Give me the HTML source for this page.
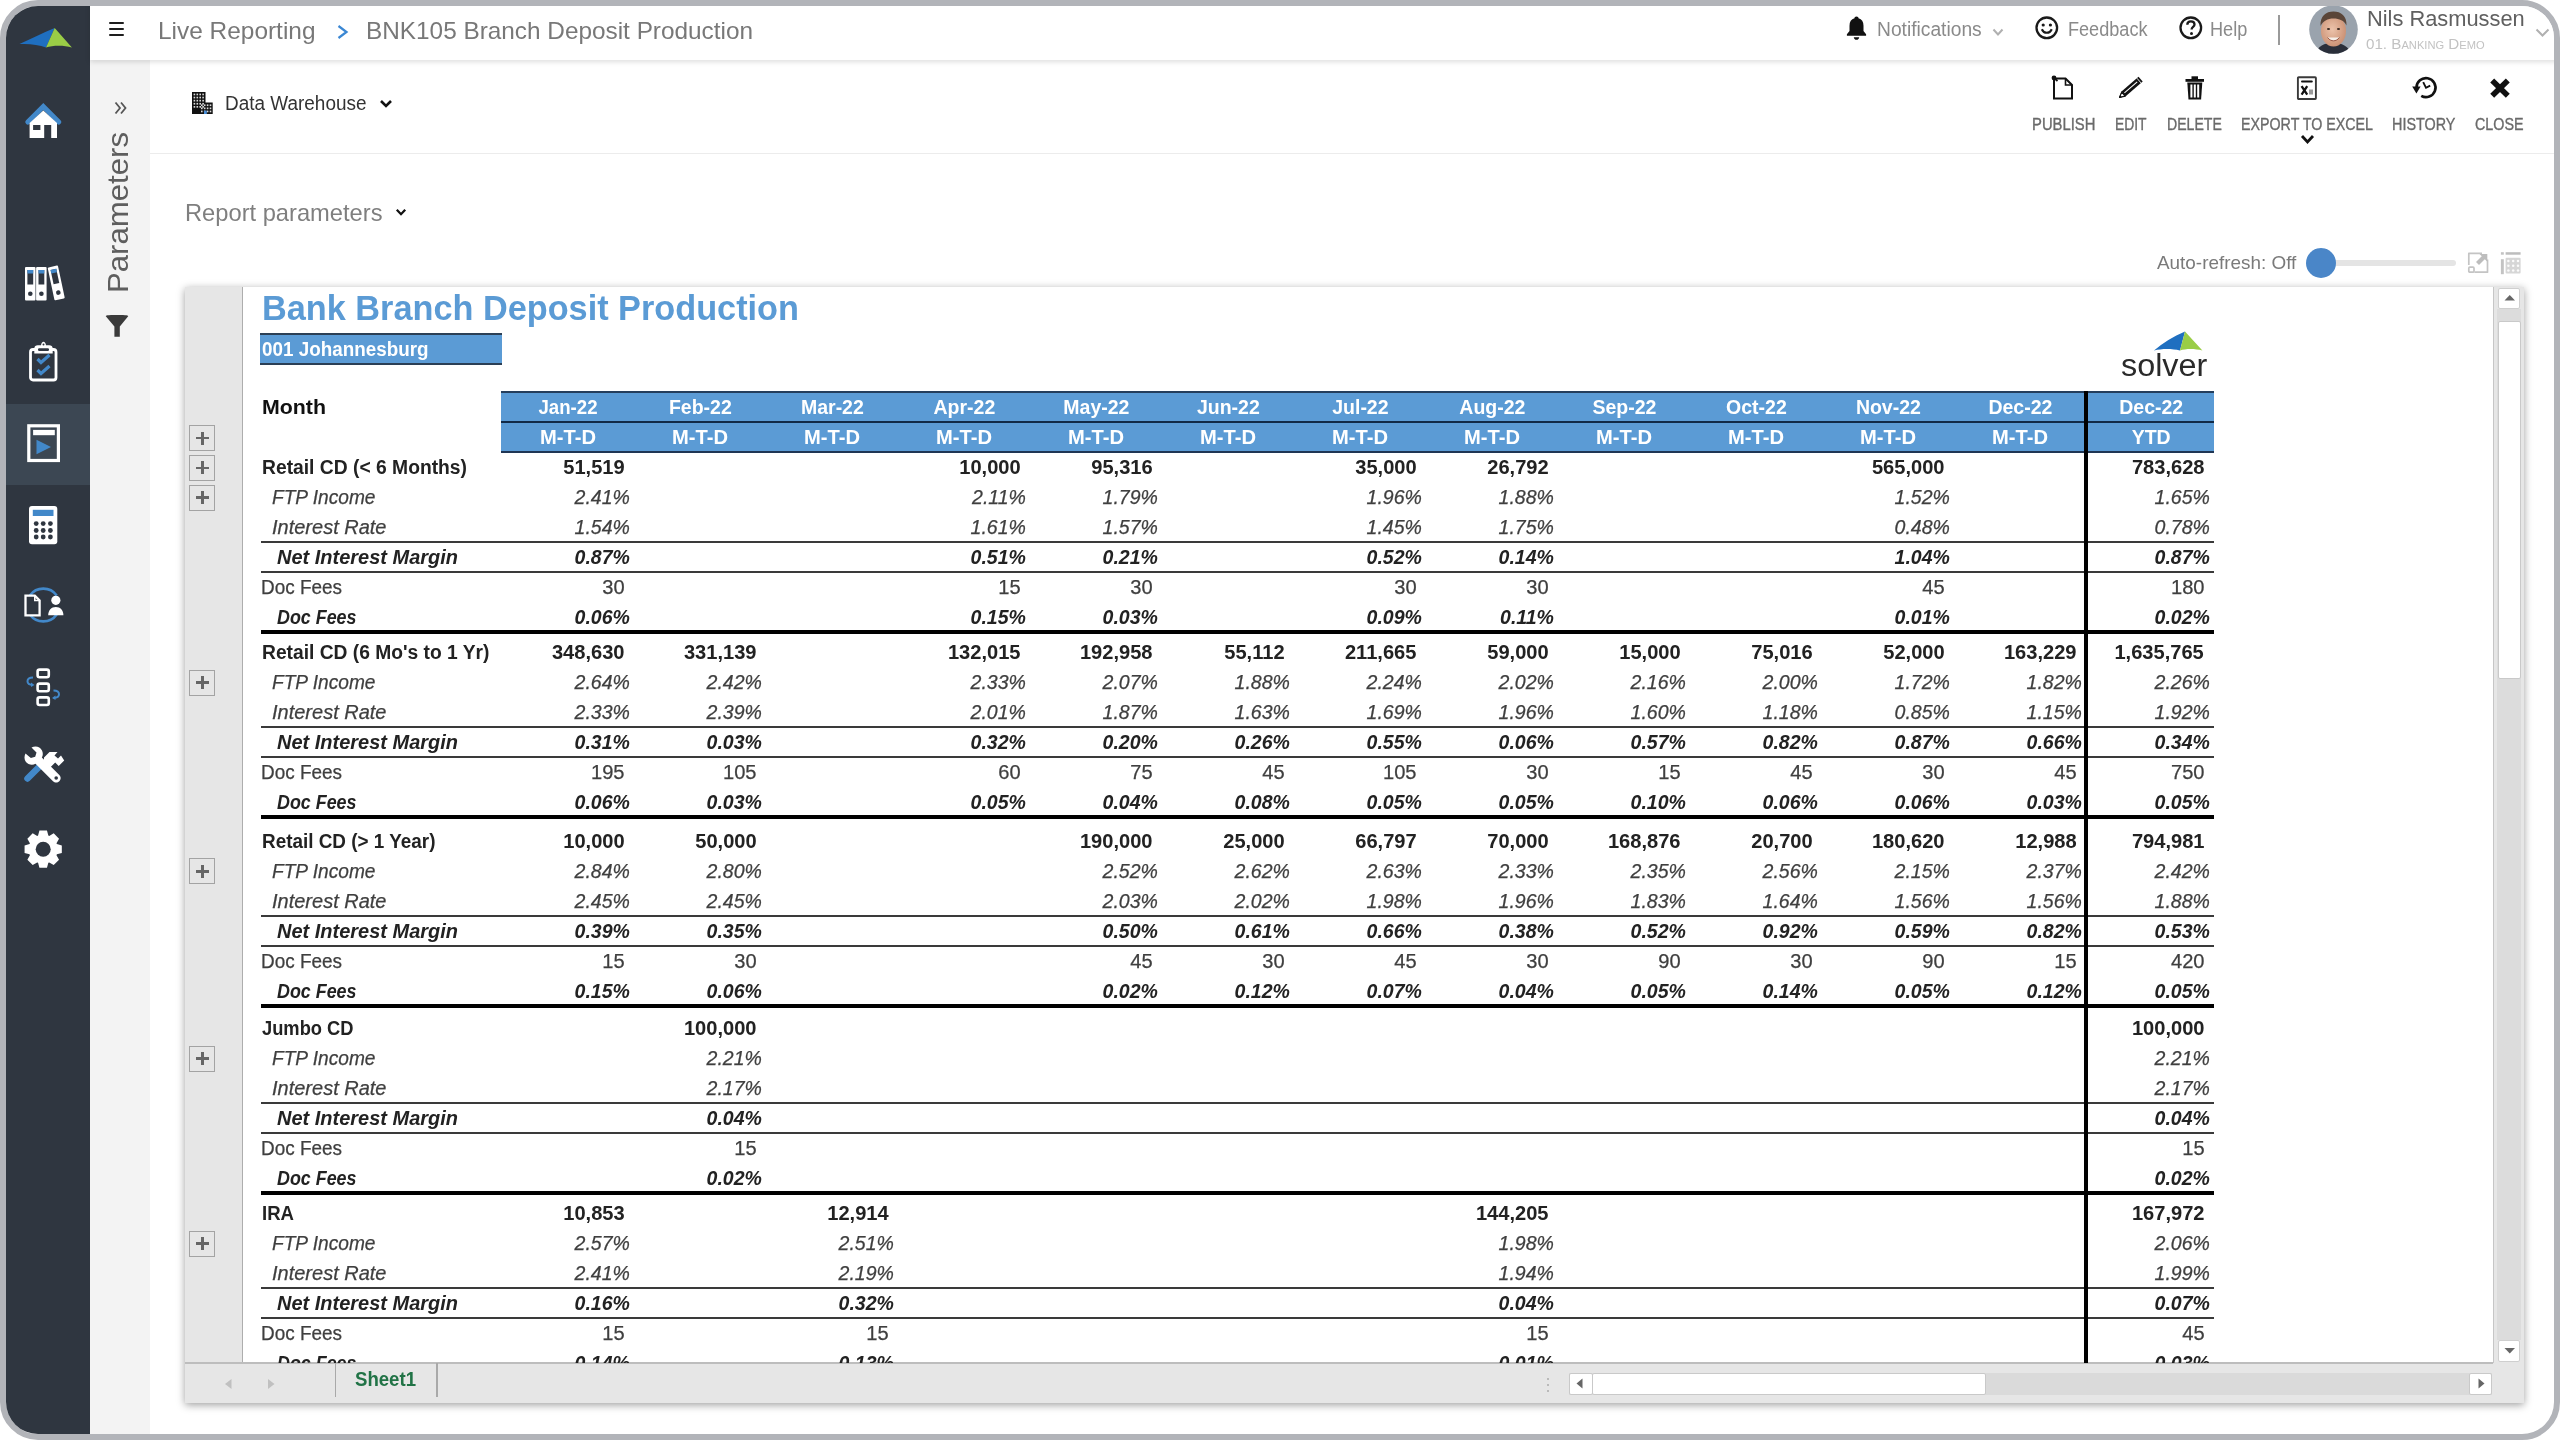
<!DOCTYPE html><html><head><meta charset="utf-8"><style>html,body{margin:0;padding:0;background:#fff;width:2560px;height:1440px;overflow:hidden;}#frame{position:absolute;left:0;top:0;width:2560px;height:1440px;box-sizing:border-box;border:6px solid #b2b4b9;border-radius:38px;overflow:hidden;background:#fff;}#in{position:absolute;left:-6px;top:-6px;width:2560px;height:1440px;will-change:transform;}</style></head><body><div id="frame"><div id="in"><div style="position:absolute;left:0px;top:0px;width:90px;height:1440px;background:#2f3640;"></div><div style="position:absolute;left:0px;top:404px;width:90px;height:81px;background:#3c4753;"></div><div style="position:absolute;left:90px;top:60px;width:60px;height:1380px;background:#f3f3f3;"></div><div style="position:absolute;left:90px;top:0px;width:2470px;height:60px;background:#fff;box-shadow:0 2px 5px rgba(0,0,0,0.13);z-index:2;"></div><div style="position:absolute;left:150px;top:153px;width:2410px;height:1px;background:#ececec;"></div><div style="position:absolute;left:108.8px;top:22.3px;width:15.4px;height:2.2px;background:#1e1e1e;border-radius:1px;z-index:3;"></div><div style="position:absolute;left:108.8px;top:28.3px;width:15.4px;height:2.2px;background:#1e1e1e;border-radius:1px;z-index:3;"></div><div style="position:absolute;left:108.8px;top:34.3px;width:15.4px;height:2.2px;background:#1e1e1e;border-radius:1px;z-index:3;"></div><div style="position:absolute;left:158.20px;top:19.28px;white-space:pre;font-family:'Liberation Sans',sans-serif;font-size:24px;line-height:24px;color:#787878;font-weight:normal;transform:scaleX(1.0177);transform-origin:0 0;z-index:3;">Live Reporting</div><svg style="position:absolute;left:336px;top:24px;overflow:visible;z-index:3;" width="14" height="16" viewBox="0 0 14 16"><polyline points="2.5,2 10.5,8 2.5,14" fill="none" stroke="#3a87d3" stroke-width="2.2"/></svg><div style="position:absolute;left:365.50px;top:19.28px;white-space:pre;font-family:'Liberation Sans',sans-serif;font-size:24px;line-height:24px;color:#787878;font-weight:normal;transform:scaleX(1.0143);transform-origin:0 0;z-index:3;">BNK105 Branch Deposit Production</div><svg style="position:absolute;left:1846px;top:16px;overflow:visible;z-index:3;" width="21" height="24" viewBox="0 0 21 24"><path d="M10.5 0.5c1.3 0 2 .8 2 1.8 3.3.8 5 3.6 5 7.4v5.3l2.6 3.3v1.5H0.9v-1.5l2.6-3.3V9.7c0-3.8 1.7-6.6 5-7.4 0-1 .7-1.8 2-1.8z" fill="#111"/><path d="M7.8 21.2h5.4c0 1.5-1.2 2.6-2.7 2.6s-2.7-1.1-2.7-2.6z" fill="#111"/></svg><div style="position:absolute;left:1876.90px;top:19.07px;white-space:pre;font-family:'Liberation Sans',sans-serif;font-size:20px;line-height:20px;color:#8a8a8a;font-weight:normal;transform:scaleX(0.9611);transform-origin:0 0;z-index:3;">Notifications</div><svg style="position:absolute;left:1992px;top:28px;overflow:visible;z-index:3;" width="12" height="9" viewBox="0 0 12 9"><polyline points="1.5,1.5 6,6.5 10.5,1.5" fill="none" stroke="#b0b0b0" stroke-width="2"/></svg><svg style="position:absolute;left:2035px;top:16px;overflow:visible;z-index:3;" width="24" height="24" viewBox="0 0 24 24"><circle cx="11.8" cy="11.8" r="10.3" fill="none" stroke="#1a1a1a" stroke-width="2.3"/><circle cx="8.2" cy="9" r="1.6" fill="#1a1a1a"/><circle cx="15.4" cy="9" r="1.6" fill="#1a1a1a"/><path d="M6.8 13.2c1.2 2.6 3 3.6 5 3.6s3.8-1 5-3.6" fill="none" stroke="#1a1a1a" stroke-width="2.1"/></svg><div style="position:absolute;left:2067.50px;top:19.07px;white-space:pre;font-family:'Liberation Sans',sans-serif;font-size:20px;line-height:20px;color:#8a8a8a;font-weight:normal;transform:scaleX(0.9050);transform-origin:0 0;z-index:3;">Feedback</div><svg style="position:absolute;left:2179px;top:16px;overflow:visible;z-index:3;" width="24" height="24" viewBox="0 0 24 24"><circle cx="11.8" cy="11.8" r="10.3" fill="none" stroke="#1a1a1a" stroke-width="2.3"/><path d="M8.3 8.8c0-2.2 1.6-3.5 3.6-3.5s3.6 1.3 3.6 3.2c0 2.4-2.9 2.5-2.9 4.9" fill="none" stroke="#1a1a1a" stroke-width="2.3"/><circle cx="12.5" cy="17.6" r="1.5" fill="#1a1a1a"/></svg><div style="position:absolute;left:2210.40px;top:19.07px;white-space:pre;font-family:'Liberation Sans',sans-serif;font-size:20px;line-height:20px;color:#8a8a8a;font-weight:normal;transform:scaleX(0.9066);transform-origin:0 0;z-index:3;">Help</div><div style="position:absolute;left:2278.3px;top:15px;width:1.6px;height:30px;background:#9a9a9a;z-index:3;"></div><svg style="position:absolute;left:2309px;top:5px;overflow:visible;z-index:3;" width="49" height="49" viewBox="0 0 49 49"><defs><clipPath id="av"><circle cx="24.5" cy="24.5" r="24.3"/></clipPath><radialGradient id="fg" cx="0.45" cy="0.45" r="0.6"><stop offset="0" stop-color="#ecc3ab"/><stop offset="1" stop-color="#c98f72"/></radialGradient></defs><g clip-path="url(#av)"><rect width="49" height="49" fill="#9aa3ad"/><path d="M6 49c3-8 9-11 18-11s15 3 19 11z" fill="#2a2f3a"/><ellipse cx="24.5" cy="26" rx="12.5" ry="15.5" fill="url(#fg)"/><path d="M11.5 21c-.5-10 5.5-14.5 13-14.5s13.5 4.5 13 14c-2.5-5-7-7-13-7s-10.5 2.5-13 7.5z" fill="#5a4538"/><ellipse cx="19.5" cy="24" rx="1.6" ry="1.1" fill="#3a2a22"/><ellipse cx="29.5" cy="24" rx="1.6" ry="1.1" fill="#3a2a22"/><path d="M18.5 32.5c2 2.5 4 3.3 6 3.3s4-.8 6-3.3" fill="#f6efe9" stroke="#9a5a48" stroke-width="1"/></g></svg><div style="position:absolute;left:2366.50px;top:8.08px;white-space:pre;font-family:'Liberation Sans',sans-serif;font-size:22px;line-height:22px;color:#606060;font-weight:normal;transform:scaleX(0.9922);transform-origin:0 0;z-index:3;">Nils Rasmussen</div><div style="position:absolute;left:2366.00px;top:36.10px;white-space:pre;font-family:'Liberation Sans',sans-serif;font-size:15px;line-height:15px;color:#c2c2c2;font-weight:normal;transform:scaleX(1.0114);transform-origin:0 0;font-variant:small-caps;z-index:3;">01. Banking Demo</div><svg style="position:absolute;left:2535px;top:28px;overflow:visible;z-index:3;" width="15" height="10" viewBox="0 0 15 10"><polyline points="1.5,1.5 7.5,7.5 13.5,1.5" fill="none" stroke="#b0b0b0" stroke-width="2"/></svg><svg style="position:absolute;left:191.7px;top:91.7px;overflow:visible;" width="22" height="23" viewBox="0 0 22 23"><rect x="0" y="0" width="13.5" height="22" fill="#111"/><rect x="7.2" y="10.5" width="13.5" height="11.5" fill="#111"/><rect x="1.6" y="1.6" width="1.6" height="1.7" fill="#fff" opacity="0.85"/><rect x="4.5" y="1.6" width="1.6" height="1.7" fill="#fff" opacity="0.85"/><rect x="7.4" y="1.6" width="1.6" height="1.7" fill="#fff" opacity="0.85"/><rect x="10.299999999999999" y="1.6" width="1.6" height="1.7" fill="#fff" opacity="0.85"/><rect x="1.6" y="4.7" width="1.6" height="1.7" fill="#fff" opacity="0.85"/><rect x="4.5" y="4.7" width="1.6" height="1.7" fill="#fff" opacity="0.85"/><rect x="7.4" y="4.7" width="1.6" height="1.7" fill="#fff" opacity="0.85"/><rect x="10.299999999999999" y="4.7" width="1.6" height="1.7" fill="#fff" opacity="0.85"/><rect x="1.6" y="7.800000000000001" width="1.6" height="1.7" fill="#fff" opacity="0.85"/><rect x="4.5" y="7.800000000000001" width="1.6" height="1.7" fill="#fff" opacity="0.85"/><rect x="7.4" y="7.800000000000001" width="1.6" height="1.7" fill="#fff" opacity="0.85"/><rect x="10.299999999999999" y="7.800000000000001" width="1.6" height="1.7" fill="#fff" opacity="0.85"/><rect x="1.6" y="10.9" width="1.6" height="1.7" fill="#fff" opacity="0.85"/><rect x="4.5" y="10.9" width="1.6" height="1.7" fill="#fff" opacity="0.85"/><rect x="7.4" y="10.9" width="1.6" height="1.7" fill="#fff" opacity="0.85"/><rect x="10.299999999999999" y="10.9" width="1.6" height="1.7" fill="#fff" opacity="0.85"/><rect x="1.6" y="14.0" width="1.6" height="1.7" fill="#fff" opacity="0.85"/><rect x="4.5" y="14.0" width="1.6" height="1.7" fill="#fff" opacity="0.85"/><rect x="7.4" y="14.0" width="1.6" height="1.7" fill="#fff" opacity="0.85"/><rect x="10.299999999999999" y="14.0" width="1.6" height="1.7" fill="#fff" opacity="0.85"/><rect x="9.0" y="12.4" width="1.6" height="1.7" fill="#fff" opacity="0.85"/><rect x="11.9" y="12.4" width="1.6" height="1.7" fill="#fff" opacity="0.85"/><rect x="14.8" y="12.4" width="1.6" height="1.7" fill="#fff" opacity="0.85"/><rect x="17.7" y="12.4" width="1.6" height="1.7" fill="#fff" opacity="0.85"/><rect x="9.0" y="15.5" width="1.6" height="1.7" fill="#fff" opacity="0.85"/><rect x="11.9" y="15.5" width="1.6" height="1.7" fill="#fff" opacity="0.85"/><rect x="14.8" y="15.5" width="1.6" height="1.7" fill="#fff" opacity="0.85"/><rect x="17.7" y="15.5" width="1.6" height="1.7" fill="#fff" opacity="0.85"/><rect x="9.0" y="18.6" width="1.6" height="1.7" fill="#fff" opacity="0.85"/><rect x="11.9" y="18.6" width="1.6" height="1.7" fill="#fff" opacity="0.85"/><rect x="14.8" y="18.6" width="1.6" height="1.7" fill="#fff" opacity="0.85"/><rect x="17.7" y="18.6" width="1.6" height="1.7" fill="#fff" opacity="0.85"/><rect x="12" y="18.6" width="2.8" height="3.4" fill="#4a8fd8"/></svg><div style="position:absolute;left:225.00px;top:93.07px;white-space:pre;font-family:'Liberation Sans',sans-serif;font-size:20px;line-height:20px;color:#333333;font-weight:normal;transform:scaleX(0.9475);transform-origin:0 0;">Data Warehouse</div><svg style="position:absolute;left:378.5px;top:99px;overflow:visible;" width="14" height="10" viewBox="0 0 14 10"><polyline points="2,2 7,7 12,2" fill="none" stroke="#111" stroke-width="2.6"/></svg><div style="position:absolute;left:2031.50px;top:115.83px;white-space:pre;font-family:'Liberation Sans',sans-serif;font-size:16.5px;line-height:16.5px;color:#6a6a6a;font-weight:normal;transform:scaleX(0.8979);transform-origin:0 0;-webkit-text-stroke:0.35px #6a6a6a;">PUBLISH</div><div style="position:absolute;left:2114.80px;top:115.83px;white-space:pre;font-family:'Liberation Sans',sans-serif;font-size:16.5px;line-height:16.5px;color:#6a6a6a;font-weight:normal;transform:scaleX(0.8406);transform-origin:0 0;-webkit-text-stroke:0.35px #6a6a6a;">EDIT</div><div style="position:absolute;left:2166.80px;top:115.83px;white-space:pre;font-family:'Liberation Sans',sans-serif;font-size:16.5px;line-height:16.5px;color:#6a6a6a;font-weight:normal;transform:scaleX(0.8537);transform-origin:0 0;-webkit-text-stroke:0.35px #6a6a6a;">DELETE</div><div style="position:absolute;left:2241.00px;top:115.83px;white-space:pre;font-family:'Liberation Sans',sans-serif;font-size:16.5px;line-height:16.5px;color:#6a6a6a;font-weight:normal;transform:scaleX(0.8636);transform-origin:0 0;-webkit-text-stroke:0.35px #6a6a6a;">EXPORT TO EXCEL</div><div style="position:absolute;left:2392.40px;top:115.83px;white-space:pre;font-family:'Liberation Sans',sans-serif;font-size:16.5px;line-height:16.5px;color:#6a6a6a;font-weight:normal;transform:scaleX(0.8715);transform-origin:0 0;-webkit-text-stroke:0.35px #6a6a6a;">HISTORY</div><div style="position:absolute;left:2475.00px;top:115.83px;white-space:pre;font-family:'Liberation Sans',sans-serif;font-size:16.5px;line-height:16.5px;color:#6a6a6a;font-weight:normal;transform:scaleX(0.8670);transform-origin:0 0;-webkit-text-stroke:0.35px #6a6a6a;">CLOSE</div><svg style="position:absolute;left:2051px;top:75px;overflow:visible;" width="24" height="25" viewBox="0 0 24 25"><path d="M3 3.5h11.5l6.5 6.5v13.5H3z" fill="none" stroke="#111" stroke-width="2"/><path d="M14.5 3.5v6.5h6.5" fill="none" stroke="#111" stroke-width="1.6"/><circle cx="3" cy="3" r="2.4" fill="#111"/><path d="M3 3l3.5 3" stroke="#111" stroke-width="1.8"/></svg><svg style="position:absolute;left:2118px;top:76px;overflow:visible;" width="26" height="24" viewBox="0 0 26 24"><path d="M1.1 21.8L3.5 15.5 20.5 0.7 24.7 5.5 7.7 20.3z" fill="#111"/><path d="M6.4 16.9L19.2 5.8" stroke="#fff" stroke-width="1.1"/><path d="M18.9 2.2l4.2 4.8" stroke="#fff" stroke-width="0.9"/><path d="M1.6 21.3L3.7 16.1 7.2 20.1z" fill="#fff" stroke="#111" stroke-width="1.2" stroke-linejoin="round"/><path d="M1.1 21.8l.9-2.6 1.8 2z" fill="#111"/></svg><svg style="position:absolute;left:2184.5px;top:76px;overflow:visible;" width="20" height="24" viewBox="0 0 20 24"><rect x="0.5" y="3" width="18.5" height="2.8" fill="#111"/><rect x="6.5" y="0.3" width="6.5" height="3" fill="#111"/><path d="M2.3 6.5h15l-1.2 17H3.5z" fill="#111"/><rect x="5.4" y="8.5" width="2" height="13" fill="#fff"/><rect x="8.8" y="8.5" width="2" height="13" fill="#fff"/><rect x="12.2" y="8.5" width="2" height="13" fill="#fff"/></svg><svg style="position:absolute;left:2296px;top:76px;overflow:visible;" width="22" height="24" viewBox="0 0 22 24"><rect x="1.9" y="1.2" width="18" height="21.8" rx="0.8" fill="none" stroke="#3a3a3a" stroke-width="1.9"/><rect x="5" y="4.6" width="11.8" height="2" rx="1" fill="#111"/><path d="M5.6 10.2l5.6 8.4M11.2 10.2l-5.6 8.4" stroke="#111" stroke-width="2.3"/><rect x="13" y="13.5" width="4" height="5" fill="#9a9a9a"/></svg><svg style="position:absolute;left:2300px;top:134px;overflow:visible;" width="15" height="11" viewBox="0 0 15 11"><polyline points="2,2 7.5,8 13,2" fill="none" stroke="#111" stroke-width="2.8"/></svg><svg style="position:absolute;left:2409.5px;top:76px;overflow:visible;" width="28" height="25" viewBox="0 0 28 25"><path d="M6.5 11.6A9.5 9.5 0 1 1 11.25 19.83" fill="none" stroke="#111" stroke-width="2.7"/><path d="M2.2 10.6h8.4l-4.2 6.9z" fill="#111"/><path d="M13.2 6.2L16 11.8 20.2 9.6" fill="none" stroke="#111" stroke-width="1.9"/></svg><svg style="position:absolute;left:2487.5px;top:76px;overflow:visible;" width="24" height="24" viewBox="0 0 24 24"><path d="M4.2 4.6L19.8 19.8M19.8 4.6L4.2 19.8" stroke="#111" stroke-width="5.6" stroke-linecap="butt"/></svg><div style="position:absolute;left:184.80px;top:200.68px;white-space:pre;font-family:'Liberation Sans',sans-serif;font-size:24px;line-height:24px;color:#7f7f7f;font-weight:normal;transform:scaleX(0.9870);transform-origin:0 0;">Report parameters</div><svg style="position:absolute;left:395px;top:208px;overflow:visible;" width="12" height="9" viewBox="0 0 12 9"><polyline points="1.8,1.8 6,6.2 10.2,1.8" fill="none" stroke="#111" stroke-width="2.3"/></svg><div style="position:absolute;left:2156.60px;top:252.52px;white-space:pre;font-family:'Liberation Sans',sans-serif;font-size:19px;line-height:19px;color:#7a7a7a;font-weight:normal;transform:scaleX(0.9942);transform-origin:0 0;">Auto-refresh: Off</div><div style="position:absolute;left:2318px;top:259.5px;width:138px;height:6.5px;background:#e4e4e4;border-radius:3px;"></div><div style="position:absolute;left:2305.7px;top:247.5px;width:30px;height:30px;background:#4a86c8;border-radius:50%;"></div><svg style="position:absolute;left:2467px;top:252px;overflow:visible;" width="22" height="22" viewBox="0 0 22 22"><path d="M7.5 20.2H20.5V7.5M15 1.4H1.8V13" fill="none" stroke="#c4c4c4" stroke-width="1.7" stroke-linejoin="round"/><rect x="1.8" y="15.2" width="5.2" height="5" rx="1" fill="none" stroke="#c4c4c4" stroke-width="1.7"/><path d="M10.5 11.5L17.5 4.5" stroke="#bdbdbd" stroke-width="4.2"/><path d="M12.5 2h7.8v7.8z" fill="#bdbdbd"/></svg><svg style="position:absolute;left:2500px;top:252px;overflow:visible;" width="22" height="22" viewBox="0 0 22 22"><rect x="0.9" y="7.2" width="2.9" height="15" fill="#c3c3c3"/><rect x="0.9" y="0.2" width="2.9" height="2.5" fill="#c3c3c3"/><rect x="5.6" y="0.2" width="15" height="2.5" fill="#bdbdbd"/><rect x="5.6" y="5.8" width="15" height="15.6" rx="1" fill="#d6d6d6"/><circle cx="8.4" cy="8.9" r="1.25" fill="#fbfbfb"/><circle cx="13.2" cy="8.9" r="1.25" fill="#fbfbfb"/><circle cx="18.0" cy="8.9" r="1.25" fill="#fbfbfb"/><circle cx="8.4" cy="13.7" r="1.25" fill="#fbfbfb"/><circle cx="13.2" cy="13.7" r="1.25" fill="#fbfbfb"/><circle cx="18.0" cy="13.7" r="1.25" fill="#fbfbfb"/><circle cx="8.4" cy="18.5" r="1.25" fill="#fbfbfb"/><circle cx="13.2" cy="18.5" r="1.25" fill="#fbfbfb"/><circle cx="18.0" cy="18.5" r="1.25" fill="#fbfbfb"/></svg><svg style="position:absolute;left:113.5px;top:101px;overflow:visible;" width="14" height="15" viewBox="0 0 14 15"><polyline points="1.5,1.5 6,7 1.5,12.5" fill="none" stroke="#555" stroke-width="1.8"/><polyline points="7,1.5 11.5,7 7,12.5" fill="none" stroke="#555" stroke-width="1.8"/></svg><div style="position:absolute;left:38.05px;top:197.9px;width:160px;height:30px;transform:rotate(-90deg);transform-origin:80px 15px;"><div style="position:absolute;left:0;top:0;white-space:pre;font-family:'Liberation Sans',sans-serif;font-size:30px;line-height:30px;color:#5e5e5e;transform:scaleX(1.0383);transform-origin:0 0;">Parameters</div></div><svg style="position:absolute;left:105px;top:315px;overflow:visible;" width="24" height="23" viewBox="0 0 24 23"><path d="M0.8 1.2c0-.7 1-1.2 11.2-1.2s11.2.5 11.2 1.2L14.8 11.5v10.3l-5.4 0V11.5z" fill="#3a3a3a"/></svg><svg style="position:absolute;left:15px;top:24px;overflow:visible;" width="62" height="28" viewBox="0 0 62 28"><path d="M4.5 20C15 15.5 27 9 39.7 4 L31 23.6C24 20.5 14 19.5 4.5 20z" fill="#1f6fc0"/><path d="M39.7 4L56.9 23.6C49 21 38 21 31 23.6z" fill="#9acd46"/></svg><svg style="position:absolute;left:22px;top:100px;overflow:visible;" width="42" height="42" viewBox="0 0 42 42"><polyline points="5.8,22 21.3,6.5 36.8,22" fill="none" stroke="#4288c9" stroke-width="5" stroke-linejoin="miter" stroke-linecap="round"/><path d="M7.6 37.9V23L21.3 10.4 35 23V37.9z" fill="#fff"/><rect x="11.1" y="25" width="7.3" height="5" fill="#2f3640"/><rect x="22.2" y="25" width="7" height="13" fill="#2f3640"/></svg><svg style="position:absolute;left:24.6px;top:266.5px;overflow:visible;" width="40" height="34" viewBox="0 0 40 34"><rect x="0" y="0" width="10.5" height="33.5" rx="1" fill="#fff"/><rect x="2.4" y="3" width="5.8" height="14.5" fill="#2f3640"/><rect x="2.4" y="3" width="5.8" height="3.5" fill="#4288c9"/><circle cx="5.3" cy="26.7" r="2.3" fill="#2f3640"/><rect x="11.1" y="0" width="10.5" height="33.5" rx="1" fill="#fff"/><rect x="13.5" y="3" width="5.8" height="14.5" fill="#2f3640"/><rect x="13.5" y="3" width="5.8" height="3.5" fill="#4288c9"/><circle cx="16.4" cy="26.7" r="2.3" fill="#2f3640"/><g transform="translate(22.6,0.6) rotate(-12 0 0)"><rect x="0" y="0" width="10.5" height="33.5" rx="1" fill="#fff"/><rect x="2.4" y="3" width="5.8" height="14.5" fill="#2f3640"/><rect x="2.4" y="3" width="5.8" height="3.5" fill="#4288c9"/><circle cx="5.3" cy="26.7" r="2.3" fill="#2f3640"/></g></svg><svg style="position:absolute;left:29px;top:341px;overflow:visible;" width="29" height="41" viewBox="0 0 29 41"><rect x="1.5" y="8.5" width="25.5" height="30.5" rx="2.5" fill="none" stroke="#fff" stroke-width="2.8"/><path d="M5.3 12.5V7.5c0-2 1.5-3.2 3.5-3.2h3.2c.3-2.2 1.3-3.6 2.5-3.6s2.2 1.4 2.5 3.6h3.2c2 0 3.5 1.2 3.5 3.2v5z" fill="#fff"/><rect x="9" y="7.2" width="11" height="2.8" rx="1.2" fill="#2f3640"/><circle cx="14.5" cy="3.4" r="1" fill="#2f3640"/><polyline points="8.5,18 12,21.5 20.5,14" fill="none" stroke="#4288c9" stroke-width="3.2"/><polyline points="8.5,29 12,32.5 20.5,25" fill="none" stroke="#4288c9" stroke-width="3.2"/></svg><svg style="position:absolute;left:26.5px;top:424px;overflow:visible;" width="34" height="39" viewBox="0 0 34 39"><rect x="1.8" y="1.8" width="29.6" height="34.7" fill="none" stroke="#fff" stroke-width="3.2"/><rect x="6.1" y="5.9" width="21.7" height="5.3" fill="#fff"/><path d="M9.5 15.8v14.5l14.5-7.25z" fill="#4288c9"/></svg><svg style="position:absolute;left:29.1px;top:505.5px;overflow:visible;" width="29" height="39" viewBox="0 0 29 39"><rect x="0" y="0" width="28.3" height="38.2" rx="3" fill="#fff"/><rect x="3.8" y="3.8" width="20.7" height="6.2" fill="#4288c9"/><circle cx="7.2" cy="17.6" r="2.4" fill="#2f3640"/><circle cx="14.2" cy="17.6" r="2.4" fill="#2f3640"/><circle cx="21.4" cy="17.6" r="2.4" fill="#2f3640"/><circle cx="7.2" cy="24.5" r="2.4" fill="#2f3640"/><circle cx="14.2" cy="24.5" r="2.4" fill="#2f3640"/><circle cx="21.4" cy="24.5" r="2.4" fill="#2f3640"/><circle cx="7.2" cy="31" r="2.4" fill="#2f3640"/><circle cx="14.2" cy="31" r="2.4" fill="#2f3640"/><circle cx="21.4" cy="31" r="2.4" fill="#2f3640"/></svg><svg style="position:absolute;left:23px;top:587px;overflow:visible;" width="42" height="37" viewBox="0 0 42 37"><path d="M6.9 8.6A16.4 16.4 0 0 1 33.7 8.6" fill="none" stroke="#4288c9" stroke-width="2.6"/><path d="M33.7 27.4A16.4 16.4 0 0 1 6.9 27.4" fill="none" stroke="#4288c9" stroke-width="2.6"/><path d="M2.5 8.7h9.3l4.8 4.8v14.8H2.5z" fill="#2f3640" stroke="#fff" stroke-width="2.3"/><path d="M11.8 8.7v4.8h4.8" fill="none" stroke="#fff" stroke-width="1.6"/><circle cx="32.85" cy="13.3" r="4.6" fill="#fff"/><path d="M25.2 28.3c0-5 3-8.3 7.6-8.3s7.6 3.3 7.6 8.3z" fill="#fff"/></svg><svg style="position:absolute;left:25px;top:666px;overflow:visible;" width="37" height="41" viewBox="0 0 37 41"><rect x="12.6" y="3.6" width="11.2" height="7.6" rx="2" fill="none" stroke="#fff" stroke-width="2.6"/><rect x="12.6" y="17.6" width="11.2" height="7.6" rx="2" fill="none" stroke="#fff" stroke-width="2.6"/><rect x="12.6" y="31.4" width="11.2" height="7.6" rx="2" fill="none" stroke="#fff" stroke-width="2.6"/><path d="M8 11.5c-4 0-5.5 2-5.5 3.8s1.5 3.6 5.5 3.6" fill="none" stroke="#4288c9" stroke-width="2"/><path d="M6 16.5l3.5 2.4-3.5 2.2z" fill="#4288c9"/><path d="M28.5 24.5c4 0 5.5 2 5.5 3.8s-1.5 3.6-5.5 3.6" fill="none" stroke="#4288c9" stroke-width="2"/><path d="M30.5 29.5l-3.5 2.4 3.5 2.2z" fill="#4288c9"/></svg><svg style="position:absolute;left:22px;top:749px;overflow:visible;" width="43" height="38" viewBox="0 0 43 38"><path d="M5.5 29.5l12-12" stroke="#4288c9" stroke-width="6.5" stroke-linecap="round"/><path d="M22 8.5l5.5-5.5h8l-3 3.5 3.5 3 3-3 3.2 5-5.5 5.5-3.5-3.5-6.5 6.5-5-5z" fill="#fff"/><path d="M3.5 4.5c-2 4-1 8.5 3 10.5 2.5 1.2 5 1 7-.2L31 32.2c1.8 1.8 4.6 1.8 6.3 0 1.8-1.8 1.8-4.6 0-6.3L19.8 8.5c1.2-2 1.4-4.5.2-7-2-4-6.5-5-10.5-3l5 5-1.3 4.3-4.3 1.3z" fill="#fff"/><circle cx="34.2" cy="29" r="1.8" fill="#2f3640"/></svg><svg style="position:absolute;left:24.2px;top:829.5px;overflow:visible;" width="39" height="39" viewBox="0 0 39 39"><polygon points="32.86,14.06 37.82,15.43 37.82,22.97 32.86,24.34 32.50,25.23 35.04,29.70 29.70,35.04 25.23,32.50 24.34,32.86 22.97,37.82 15.43,37.82 14.06,32.86 13.17,32.50 8.70,35.04 3.36,29.70 5.90,25.23 5.54,24.34 0.58,22.97 0.58,15.43 5.54,14.06 5.90,13.17 3.36,8.70 8.70,3.36 13.17,5.90 14.06,5.54 15.43,0.58 22.97,0.58 24.34,5.54 25.23,5.90 29.70,3.36 35.04,8.70 32.50,13.17" fill="#fff"/><circle cx="19.2" cy="19.2" r="7.5" fill="#2f3640"/></svg><div style="position:absolute;left:185px;top:287px;width:2339px;height:1116px;background:#e6e6e6;box-shadow:0 2px 8px rgba(0,0,0,0.38);"></div><div style="position:absolute;left:243px;top:287px;width:2249.5px;height:1075.5px;background:#fff;"></div><div style="position:absolute;left:241.5px;top:287px;width:1.6px;height:1075.5px;background:#adadad;"></div><div style="position:absolute;left:2492.5px;top:287px;width:1.3px;height:1075.5px;background:#c6c6c6;"></div><div style="position:absolute;left:2497px;top:309px;width:24px;height:1031px;background:#dcdcdc;"></div><div style="position:absolute;left:2498px;top:288px;width:22px;height:21px;background:#fff;border:1px solid #cfcfcf;box-sizing:border-box;border-radius:2px;"></div><svg style="position:absolute;left:2504px;top:294px;overflow:visible;" width="12" height="8" viewBox="0 0 12 8"><path d="M0.5 6.5L5.75 1 11 6.5z" fill="#666"/></svg><div style="position:absolute;left:2498px;top:320.5px;width:22.5px;height:358px;background:#fff;border:1px solid #c9c9c9;box-sizing:border-box;border-radius:2px;"></div><div style="position:absolute;left:2498px;top:1340px;width:22px;height:21.5px;background:#fff;border:1px solid #cfcfcf;box-sizing:border-box;border-radius:2px;"></div><svg style="position:absolute;left:2504px;top:1347px;overflow:visible;" width="12" height="8" viewBox="0 0 12 8"><path d="M0.5 1L5.75 6.5 11 1z" fill="#666"/></svg><div style="position:absolute;left:185px;top:1362px;width:2308px;height:1.8px;background:#bdbdbd;"></div><svg style="position:absolute;left:224px;top:1378px;overflow:visible;" width="9" height="12" viewBox="0 0 9 12"><path d="M7.5 1v10L1 6z" fill="#c0c0c0"/></svg><svg style="position:absolute;left:267px;top:1378px;overflow:visible;" width="9" height="12" viewBox="0 0 9 12"><path d="M1 1v10L7.5 6z" fill="#c0c0c0"/></svg><div style="position:absolute;left:334.6px;top:1363px;width:1.6px;height:34px;background:#a9a9a9;"></div><div style="position:absolute;left:436px;top:1363px;width:1.6px;height:34px;background:#a9a9a9;"></div><div style="position:absolute;left:354.70px;top:1370.29px;white-space:pre;font-family:'Liberation Sans',sans-serif;font-size:19.5px;line-height:19.5px;color:#217346;font-weight:bold;transform:scaleX(0.9538);transform-origin:0 0;">Sheet1</div><div style="position:absolute;left:1546.7px;top:1377.5px;width:2.2px;height:2.2px;background:#ababab;border-radius:50%;"></div><div style="position:absolute;left:1546.7px;top:1383.5px;width:2.2px;height:2.2px;background:#ababab;border-radius:50%;"></div><div style="position:absolute;left:1546.7px;top:1389.5px;width:2.2px;height:2.2px;background:#ababab;border-radius:50%;"></div><div style="position:absolute;left:1568.5px;top:1372.8px;width:923px;height:22px;background:#dadada;"></div><div style="position:absolute;left:1568.5px;top:1372.8px;width:24px;height:22px;background:#fff;border:1px solid #c9c9c9;box-sizing:border-box;border-radius:2px;"></div><svg style="position:absolute;left:1575px;top:1377px;overflow:visible;" width="10" height="13" viewBox="0 0 10 13"><path d="M7.5 1.5v10L1.5 6.5z" fill="#666"/></svg><div style="position:absolute;left:1591.5px;top:1372.8px;width:394px;height:22px;background:#fff;border:1px solid #c9c9c9;box-sizing:border-box;border-radius:2px;"></div><div style="position:absolute;left:2469.3px;top:1373px;width:22.5px;height:22px;background:#fff;border:1px solid #c9c9c9;box-sizing:border-box;border-radius:2px;"></div><svg style="position:absolute;left:2476px;top:1377px;overflow:visible;" width="10" height="13" viewBox="0 0 10 13"><path d="M2.5 1.5v10L8.5 6.5z" fill="#666"/></svg><div style="position:absolute;left:189.3px;top:425px;width:26px;height:26px;border:1.4px solid #a3a3a3;box-sizing:border-box;"></div><div style="position:absolute;left:195.8px;top:436.75px;width:13px;height:2.5px;background:#666;"></div><div style="position:absolute;left:201.05px;top:431.5px;width:2.5px;height:13px;background:#666;"></div><div style="position:absolute;left:189.3px;top:454.8px;width:26px;height:26px;border:1.4px solid #a3a3a3;box-sizing:border-box;"></div><div style="position:absolute;left:195.8px;top:466.55px;width:13px;height:2.5px;background:#666;"></div><div style="position:absolute;left:201.05px;top:461.3px;width:2.5px;height:13px;background:#666;"></div><div style="position:absolute;left:189.3px;top:484.6px;width:26px;height:26px;border:1.4px solid #a3a3a3;box-sizing:border-box;"></div><div style="position:absolute;left:195.8px;top:496.35px;width:13px;height:2.5px;background:#666;"></div><div style="position:absolute;left:201.05px;top:491.1px;width:2.5px;height:13px;background:#666;"></div><div style="position:absolute;left:189.3px;top:669.5px;width:26px;height:26px;border:1.4px solid #a3a3a3;box-sizing:border-box;"></div><div style="position:absolute;left:195.8px;top:681.25px;width:13px;height:2.5px;background:#666;"></div><div style="position:absolute;left:201.05px;top:676.0px;width:2.5px;height:13px;background:#666;"></div><div style="position:absolute;left:189.3px;top:858.3px;width:26px;height:26px;border:1.4px solid #a3a3a3;box-sizing:border-box;"></div><div style="position:absolute;left:195.8px;top:870.05px;width:13px;height:2.5px;background:#666;"></div><div style="position:absolute;left:201.05px;top:864.8px;width:2.5px;height:13px;background:#666;"></div><div style="position:absolute;left:189.3px;top:1045.5px;width:26px;height:26px;border:1.4px solid #a3a3a3;box-sizing:border-box;"></div><div style="position:absolute;left:195.8px;top:1057.25px;width:13px;height:2.5px;background:#666;"></div><div style="position:absolute;left:201.05px;top:1052.0px;width:2.5px;height:13px;background:#666;"></div><div style="position:absolute;left:189.3px;top:1230.5px;width:26px;height:26px;border:1.4px solid #a3a3a3;box-sizing:border-box;"></div><div style="position:absolute;left:195.8px;top:1242.25px;width:13px;height:2.5px;background:#666;"></div><div style="position:absolute;left:201.05px;top:1237.0px;width:2.5px;height:13px;background:#666;"></div><div style="position:absolute;left:243px;top:287px;width:2249.5px;height:1075.5px;overflow:hidden;"><div style="position:absolute;left:-243px;top:-287px;width:2560px;height:1440px;"><div style="position:absolute;left:262.30px;top:290.37px;white-space:pre;font-family:'Liberation Sans',sans-serif;font-size:35px;line-height:35px;color:#5b9bd5;font-weight:bold;transform:scaleX(0.9792);transform-origin:0 0;">Bank Branch Deposit Production</div><div style="position:absolute;left:260px;top:332.7px;width:242px;height:32px;background:#5b9bd5;border-top:2.6px solid #2b3f55;border-bottom:2.6px solid #2b3f55;box-sizing:border-box;"></div><div style="position:absolute;left:262.00px;top:339.79px;white-space:pre;font-family:'Liberation Sans',sans-serif;font-size:19.5px;line-height:19.5px;color:#fff;font-weight:bold;transform:scaleX(0.9663);transform-origin:0 0;">001 Johannesburg</div><svg style="position:absolute;left:2153px;top:330px;overflow:visible;" width="51" height="22" viewBox="0 0 51 22"><path d="M1 20.5C10 13 20 6.5 32 1.5L27 20.5C19 18.5 9 18.5 1 20.5z" fill="#1f6fc0"/><path d="M32 1.5L49.4 20.5C42 18.5 33 18.5 27 20.5z" fill="#9acd46"/></svg><div style="position:absolute;left:2120.70px;top:350.26px;white-space:pre;font-family:'Liberation Sans',sans-serif;font-size:31px;line-height:31px;color:#2a2a2a;font-weight:normal;transform:scaleX(1.0435);transform-origin:0 0;">solver</div><div style="position:absolute;left:501px;top:391px;width:1713.4px;height:62px;background:#5b9bd5;"></div><div style="position:absolute;left:501px;top:391px;width:1713.4px;height:2.4px;background:#243e5c;"></div><div style="position:absolute;left:501px;top:420.6px;width:1713.4px;height:2.8px;background:#112a47;"></div><div style="position:absolute;left:501px;top:450.6px;width:1713.4px;height:2.2px;background:#1f3654;"></div><div style="position:absolute;left:262.40px;top:397.99px;white-space:pre;font-family:'Liberation Sans',sans-serif;font-size:19.5px;line-height:19.5px;color:#111;font-weight:bold;transform:scaleX(1.0943);transform-origin:0 0;">Month</div><div style="position:absolute;left:-31.60px;width:1200px;text-align:center;top:397.99px;white-space:pre;font-family:'Liberation Sans',sans-serif;font-size:19.5px;line-height:19.5px;color:#fff;font-weight:bold;transform:scaleX(0.9547);transform-origin:50% 0;">Jan-22</div><div style="position:absolute;left:-31.60px;width:1200px;text-align:center;top:427.99px;white-space:pre;font-family:'Liberation Sans',sans-serif;font-size:19.5px;line-height:19.5px;color:#fff;font-weight:bold;transform:scaleX(1.0340);transform-origin:50% 0;">M-T-D</div><div style="position:absolute;left:100.40px;width:1200px;text-align:center;top:397.99px;white-space:pre;font-family:'Liberation Sans',sans-serif;font-size:19.5px;line-height:19.5px;color:#fff;font-weight:bold;">Feb-22</div><div style="position:absolute;left:100.40px;width:1200px;text-align:center;top:427.99px;white-space:pre;font-family:'Liberation Sans',sans-serif;font-size:19.5px;line-height:19.5px;color:#fff;font-weight:bold;transform:scaleX(1.0340);transform-origin:50% 0;">M-T-D</div><div style="position:absolute;left:232.40px;width:1200px;text-align:center;top:397.99px;white-space:pre;font-family:'Liberation Sans',sans-serif;font-size:19.5px;line-height:19.5px;color:#fff;font-weight:bold;">Mar-22</div><div style="position:absolute;left:232.40px;width:1200px;text-align:center;top:427.99px;white-space:pre;font-family:'Liberation Sans',sans-serif;font-size:19.5px;line-height:19.5px;color:#fff;font-weight:bold;transform:scaleX(1.0340);transform-origin:50% 0;">M-T-D</div><div style="position:absolute;left:364.40px;width:1200px;text-align:center;top:397.99px;white-space:pre;font-family:'Liberation Sans',sans-serif;font-size:19.5px;line-height:19.5px;color:#fff;font-weight:bold;">Apr-22</div><div style="position:absolute;left:364.40px;width:1200px;text-align:center;top:427.99px;white-space:pre;font-family:'Liberation Sans',sans-serif;font-size:19.5px;line-height:19.5px;color:#fff;font-weight:bold;transform:scaleX(1.0340);transform-origin:50% 0;">M-T-D</div><div style="position:absolute;left:496.40px;width:1200px;text-align:center;top:397.99px;white-space:pre;font-family:'Liberation Sans',sans-serif;font-size:19.5px;line-height:19.5px;color:#fff;font-weight:bold;">May-22</div><div style="position:absolute;left:496.40px;width:1200px;text-align:center;top:427.99px;white-space:pre;font-family:'Liberation Sans',sans-serif;font-size:19.5px;line-height:19.5px;color:#fff;font-weight:bold;transform:scaleX(1.0340);transform-origin:50% 0;">M-T-D</div><div style="position:absolute;left:628.40px;width:1200px;text-align:center;top:397.99px;white-space:pre;font-family:'Liberation Sans',sans-serif;font-size:19.5px;line-height:19.5px;color:#fff;font-weight:bold;">Jun-22</div><div style="position:absolute;left:628.40px;width:1200px;text-align:center;top:427.99px;white-space:pre;font-family:'Liberation Sans',sans-serif;font-size:19.5px;line-height:19.5px;color:#fff;font-weight:bold;transform:scaleX(1.0340);transform-origin:50% 0;">M-T-D</div><div style="position:absolute;left:760.40px;width:1200px;text-align:center;top:397.99px;white-space:pre;font-family:'Liberation Sans',sans-serif;font-size:19.5px;line-height:19.5px;color:#fff;font-weight:bold;">Jul-22</div><div style="position:absolute;left:760.40px;width:1200px;text-align:center;top:427.99px;white-space:pre;font-family:'Liberation Sans',sans-serif;font-size:19.5px;line-height:19.5px;color:#fff;font-weight:bold;transform:scaleX(1.0340);transform-origin:50% 0;">M-T-D</div><div style="position:absolute;left:892.40px;width:1200px;text-align:center;top:397.99px;white-space:pre;font-family:'Liberation Sans',sans-serif;font-size:19.5px;line-height:19.5px;color:#fff;font-weight:bold;">Aug-22</div><div style="position:absolute;left:892.40px;width:1200px;text-align:center;top:427.99px;white-space:pre;font-family:'Liberation Sans',sans-serif;font-size:19.5px;line-height:19.5px;color:#fff;font-weight:bold;transform:scaleX(1.0340);transform-origin:50% 0;">M-T-D</div><div style="position:absolute;left:1024.40px;width:1200px;text-align:center;top:397.99px;white-space:pre;font-family:'Liberation Sans',sans-serif;font-size:19.5px;line-height:19.5px;color:#fff;font-weight:bold;">Sep-22</div><div style="position:absolute;left:1024.40px;width:1200px;text-align:center;top:427.99px;white-space:pre;font-family:'Liberation Sans',sans-serif;font-size:19.5px;line-height:19.5px;color:#fff;font-weight:bold;transform:scaleX(1.0340);transform-origin:50% 0;">M-T-D</div><div style="position:absolute;left:1156.40px;width:1200px;text-align:center;top:397.99px;white-space:pre;font-family:'Liberation Sans',sans-serif;font-size:19.5px;line-height:19.5px;color:#fff;font-weight:bold;">Oct-22</div><div style="position:absolute;left:1156.40px;width:1200px;text-align:center;top:427.99px;white-space:pre;font-family:'Liberation Sans',sans-serif;font-size:19.5px;line-height:19.5px;color:#fff;font-weight:bold;transform:scaleX(1.0340);transform-origin:50% 0;">M-T-D</div><div style="position:absolute;left:1288.40px;width:1200px;text-align:center;top:397.99px;white-space:pre;font-family:'Liberation Sans',sans-serif;font-size:19.5px;line-height:19.5px;color:#fff;font-weight:bold;">Nov-22</div><div style="position:absolute;left:1288.40px;width:1200px;text-align:center;top:427.99px;white-space:pre;font-family:'Liberation Sans',sans-serif;font-size:19.5px;line-height:19.5px;color:#fff;font-weight:bold;transform:scaleX(1.0340);transform-origin:50% 0;">M-T-D</div><div style="position:absolute;left:1420.40px;width:1200px;text-align:center;top:397.99px;white-space:pre;font-family:'Liberation Sans',sans-serif;font-size:19.5px;line-height:19.5px;color:#fff;font-weight:bold;">Dec-22</div><div style="position:absolute;left:1420.40px;width:1200px;text-align:center;top:427.99px;white-space:pre;font-family:'Liberation Sans',sans-serif;font-size:19.5px;line-height:19.5px;color:#fff;font-weight:bold;transform:scaleX(1.0340);transform-origin:50% 0;">M-T-D</div><div style="position:absolute;left:1551.20px;width:1200px;text-align:center;top:397.99px;white-space:pre;font-family:'Liberation Sans',sans-serif;font-size:19.5px;line-height:19.5px;color:#fff;font-weight:bold;">Dec-22</div><div style="position:absolute;left:1551.20px;width:1200px;text-align:center;top:427.99px;white-space:pre;font-family:'Liberation Sans',sans-serif;font-size:19.5px;line-height:19.5px;color:#fff;font-weight:bold;">YTD</div><div style="position:absolute;left:261px;top:540.7px;width:1953.4px;height:2.2px;background:#3a3a3a;"></div><div style="position:absolute;left:261px;top:570.7px;width:1953.4px;height:2.2px;background:#3a3a3a;"></div><div style="position:absolute;left:261px;top:629.7px;width:1953.4px;height:4.4px;background:#000;"></div><div style="position:absolute;left:262.40px;top:458.49px;white-space:pre;font-family:'Liberation Sans',sans-serif;font-size:19.5px;line-height:19.5px;color:#222222;font-weight:bold;transform:scaleX(0.9880);transform-origin:0 0;">Retail CD (&lt; 6 Months)</div><div style="position:absolute;left:271.60px;top:488.19px;white-space:pre;font-family:'Liberation Sans',sans-serif;font-size:19.5px;line-height:19.5px;color:#3f3f3f;font-weight:normal;font-style:italic;transform:scaleX(0.9812);transform-origin:0 0;-webkit-text-stroke:0.25px #3f3f3f;">FTP Income</div><div style="position:absolute;left:271.60px;top:518.19px;white-space:pre;font-family:'Liberation Sans',sans-serif;font-size:19.5px;line-height:19.5px;color:#3f3f3f;font-weight:normal;font-style:italic;transform:scaleX(1.0256);transform-origin:0 0;-webkit-text-stroke:0.25px #3f3f3f;">Interest Rate</div><div style="position:absolute;left:276.60px;top:548.19px;white-space:pre;font-family:'Liberation Sans',sans-serif;font-size:19.5px;line-height:19.5px;color:#222222;font-weight:bold;font-style:italic;transform:scaleX(1.0248);transform-origin:0 0;">Net Interest Margin</div><div style="position:absolute;left:261.20px;top:578.19px;white-space:pre;font-family:'Liberation Sans',sans-serif;font-size:19.5px;line-height:19.5px;color:#3f3f3f;font-weight:normal;transform:scaleX(0.9706);transform-origin:0 0;-webkit-text-stroke:0.25px #3f3f3f;">Doc Fees</div><div style="position:absolute;left:277.20px;top:608.19px;white-space:pre;font-family:'Liberation Sans',sans-serif;font-size:19.5px;line-height:19.5px;color:#222222;font-weight:bold;font-style:italic;transform:scaleX(0.9169);transform-origin:0 0;">Doc Fees</div><div style="position:absolute;right:1935.80px;top:458.49px;white-space:pre;font-family:'Liberation Sans',sans-serif;font-size:19.5px;line-height:19.5px;color:#222222;font-weight:bold;transform:scaleX(1.0300);transform-origin:100% 0;">51,519</div><div style="position:absolute;right:1539.80px;top:458.49px;white-space:pre;font-family:'Liberation Sans',sans-serif;font-size:19.5px;line-height:19.5px;color:#222222;font-weight:bold;transform:scaleX(1.0300);transform-origin:100% 0;">10,000</div><div style="position:absolute;right:1407.80px;top:458.49px;white-space:pre;font-family:'Liberation Sans',sans-serif;font-size:19.5px;line-height:19.5px;color:#222222;font-weight:bold;transform:scaleX(1.0300);transform-origin:100% 0;">95,316</div><div style="position:absolute;right:1143.80px;top:458.49px;white-space:pre;font-family:'Liberation Sans',sans-serif;font-size:19.5px;line-height:19.5px;color:#222222;font-weight:bold;transform:scaleX(1.0300);transform-origin:100% 0;">35,000</div><div style="position:absolute;right:1011.80px;top:458.49px;white-space:pre;font-family:'Liberation Sans',sans-serif;font-size:19.5px;line-height:19.5px;color:#222222;font-weight:bold;transform:scaleX(1.0300);transform-origin:100% 0;">26,792</div><div style="position:absolute;right:615.80px;top:458.49px;white-space:pre;font-family:'Liberation Sans',sans-serif;font-size:19.5px;line-height:19.5px;color:#222222;font-weight:bold;transform:scaleX(1.0300);transform-origin:100% 0;">565,000</div><div style="position:absolute;right:355.80px;top:458.49px;white-space:pre;font-family:'Liberation Sans',sans-serif;font-size:19.5px;line-height:19.5px;color:#222222;font-weight:bold;transform:scaleX(1.0300);transform-origin:100% 0;">783,628</div><div style="position:absolute;right:1930.10px;top:488.19px;white-space:pre;font-family:'Liberation Sans',sans-serif;font-size:19.5px;line-height:19.5px;color:#3f3f3f;font-weight:normal;font-style:italic;-webkit-text-stroke:0.25px #3f3f3f;">2.41%</div><div style="position:absolute;right:1534.10px;top:488.19px;white-space:pre;font-family:'Liberation Sans',sans-serif;font-size:19.5px;line-height:19.5px;color:#3f3f3f;font-weight:normal;font-style:italic;-webkit-text-stroke:0.25px #3f3f3f;">2.11%</div><div style="position:absolute;right:1402.10px;top:488.19px;white-space:pre;font-family:'Liberation Sans',sans-serif;font-size:19.5px;line-height:19.5px;color:#3f3f3f;font-weight:normal;font-style:italic;-webkit-text-stroke:0.25px #3f3f3f;">1.79%</div><div style="position:absolute;right:1138.10px;top:488.19px;white-space:pre;font-family:'Liberation Sans',sans-serif;font-size:19.5px;line-height:19.5px;color:#3f3f3f;font-weight:normal;font-style:italic;-webkit-text-stroke:0.25px #3f3f3f;">1.96%</div><div style="position:absolute;right:1006.10px;top:488.19px;white-space:pre;font-family:'Liberation Sans',sans-serif;font-size:19.5px;line-height:19.5px;color:#3f3f3f;font-weight:normal;font-style:italic;-webkit-text-stroke:0.25px #3f3f3f;">1.88%</div><div style="position:absolute;right:610.10px;top:488.19px;white-space:pre;font-family:'Liberation Sans',sans-serif;font-size:19.5px;line-height:19.5px;color:#3f3f3f;font-weight:normal;font-style:italic;-webkit-text-stroke:0.25px #3f3f3f;">1.52%</div><div style="position:absolute;right:350.10px;top:488.19px;white-space:pre;font-family:'Liberation Sans',sans-serif;font-size:19.5px;line-height:19.5px;color:#3f3f3f;font-weight:normal;font-style:italic;-webkit-text-stroke:0.25px #3f3f3f;">1.65%</div><div style="position:absolute;right:1930.10px;top:518.19px;white-space:pre;font-family:'Liberation Sans',sans-serif;font-size:19.5px;line-height:19.5px;color:#3f3f3f;font-weight:normal;font-style:italic;-webkit-text-stroke:0.25px #3f3f3f;">1.54%</div><div style="position:absolute;right:1534.10px;top:518.19px;white-space:pre;font-family:'Liberation Sans',sans-serif;font-size:19.5px;line-height:19.5px;color:#3f3f3f;font-weight:normal;font-style:italic;-webkit-text-stroke:0.25px #3f3f3f;">1.61%</div><div style="position:absolute;right:1402.10px;top:518.19px;white-space:pre;font-family:'Liberation Sans',sans-serif;font-size:19.5px;line-height:19.5px;color:#3f3f3f;font-weight:normal;font-style:italic;-webkit-text-stroke:0.25px #3f3f3f;">1.57%</div><div style="position:absolute;right:1138.10px;top:518.19px;white-space:pre;font-family:'Liberation Sans',sans-serif;font-size:19.5px;line-height:19.5px;color:#3f3f3f;font-weight:normal;font-style:italic;-webkit-text-stroke:0.25px #3f3f3f;">1.45%</div><div style="position:absolute;right:1006.10px;top:518.19px;white-space:pre;font-family:'Liberation Sans',sans-serif;font-size:19.5px;line-height:19.5px;color:#3f3f3f;font-weight:normal;font-style:italic;-webkit-text-stroke:0.25px #3f3f3f;">1.75%</div><div style="position:absolute;right:610.10px;top:518.19px;white-space:pre;font-family:'Liberation Sans',sans-serif;font-size:19.5px;line-height:19.5px;color:#3f3f3f;font-weight:normal;font-style:italic;-webkit-text-stroke:0.25px #3f3f3f;">0.48%</div><div style="position:absolute;right:350.10px;top:518.19px;white-space:pre;font-family:'Liberation Sans',sans-serif;font-size:19.5px;line-height:19.5px;color:#3f3f3f;font-weight:normal;font-style:italic;-webkit-text-stroke:0.25px #3f3f3f;">0.78%</div><div style="position:absolute;right:1930.10px;top:548.19px;white-space:pre;font-family:'Liberation Sans',sans-serif;font-size:19.5px;line-height:19.5px;color:#222222;font-weight:bold;font-style:italic;">0.87%</div><div style="position:absolute;right:1534.10px;top:548.19px;white-space:pre;font-family:'Liberation Sans',sans-serif;font-size:19.5px;line-height:19.5px;color:#222222;font-weight:bold;font-style:italic;">0.51%</div><div style="position:absolute;right:1402.10px;top:548.19px;white-space:pre;font-family:'Liberation Sans',sans-serif;font-size:19.5px;line-height:19.5px;color:#222222;font-weight:bold;font-style:italic;">0.21%</div><div style="position:absolute;right:1138.10px;top:548.19px;white-space:pre;font-family:'Liberation Sans',sans-serif;font-size:19.5px;line-height:19.5px;color:#222222;font-weight:bold;font-style:italic;">0.52%</div><div style="position:absolute;right:1006.10px;top:548.19px;white-space:pre;font-family:'Liberation Sans',sans-serif;font-size:19.5px;line-height:19.5px;color:#222222;font-weight:bold;font-style:italic;">0.14%</div><div style="position:absolute;right:610.10px;top:548.19px;white-space:pre;font-family:'Liberation Sans',sans-serif;font-size:19.5px;line-height:19.5px;color:#222222;font-weight:bold;font-style:italic;">1.04%</div><div style="position:absolute;right:350.10px;top:548.19px;white-space:pre;font-family:'Liberation Sans',sans-serif;font-size:19.5px;line-height:19.5px;color:#222222;font-weight:bold;font-style:italic;">0.87%</div><div style="position:absolute;right:1935.80px;top:578.19px;white-space:pre;font-family:'Liberation Sans',sans-serif;font-size:19.5px;line-height:19.5px;color:#3f3f3f;font-weight:normal;transform:scaleX(1.0300);transform-origin:100% 0;-webkit-text-stroke:0.25px #3f3f3f;">30</div><div style="position:absolute;right:1539.80px;top:578.19px;white-space:pre;font-family:'Liberation Sans',sans-serif;font-size:19.5px;line-height:19.5px;color:#3f3f3f;font-weight:normal;transform:scaleX(1.0300);transform-origin:100% 0;-webkit-text-stroke:0.25px #3f3f3f;">15</div><div style="position:absolute;right:1407.80px;top:578.19px;white-space:pre;font-family:'Liberation Sans',sans-serif;font-size:19.5px;line-height:19.5px;color:#3f3f3f;font-weight:normal;transform:scaleX(1.0300);transform-origin:100% 0;-webkit-text-stroke:0.25px #3f3f3f;">30</div><div style="position:absolute;right:1143.80px;top:578.19px;white-space:pre;font-family:'Liberation Sans',sans-serif;font-size:19.5px;line-height:19.5px;color:#3f3f3f;font-weight:normal;transform:scaleX(1.0300);transform-origin:100% 0;-webkit-text-stroke:0.25px #3f3f3f;">30</div><div style="position:absolute;right:1011.80px;top:578.19px;white-space:pre;font-family:'Liberation Sans',sans-serif;font-size:19.5px;line-height:19.5px;color:#3f3f3f;font-weight:normal;transform:scaleX(1.0300);transform-origin:100% 0;-webkit-text-stroke:0.25px #3f3f3f;">30</div><div style="position:absolute;right:615.80px;top:578.19px;white-space:pre;font-family:'Liberation Sans',sans-serif;font-size:19.5px;line-height:19.5px;color:#3f3f3f;font-weight:normal;transform:scaleX(1.0300);transform-origin:100% 0;-webkit-text-stroke:0.25px #3f3f3f;">45</div><div style="position:absolute;right:355.80px;top:578.19px;white-space:pre;font-family:'Liberation Sans',sans-serif;font-size:19.5px;line-height:19.5px;color:#3f3f3f;font-weight:normal;transform:scaleX(1.0300);transform-origin:100% 0;-webkit-text-stroke:0.25px #3f3f3f;">180</div><div style="position:absolute;right:1930.10px;top:608.19px;white-space:pre;font-family:'Liberation Sans',sans-serif;font-size:19.5px;line-height:19.5px;color:#222222;font-weight:bold;font-style:italic;">0.06%</div><div style="position:absolute;right:1534.10px;top:608.19px;white-space:pre;font-family:'Liberation Sans',sans-serif;font-size:19.5px;line-height:19.5px;color:#222222;font-weight:bold;font-style:italic;">0.15%</div><div style="position:absolute;right:1402.10px;top:608.19px;white-space:pre;font-family:'Liberation Sans',sans-serif;font-size:19.5px;line-height:19.5px;color:#222222;font-weight:bold;font-style:italic;">0.03%</div><div style="position:absolute;right:1138.10px;top:608.19px;white-space:pre;font-family:'Liberation Sans',sans-serif;font-size:19.5px;line-height:19.5px;color:#222222;font-weight:bold;font-style:italic;">0.09%</div><div style="position:absolute;right:1006.10px;top:608.19px;white-space:pre;font-family:'Liberation Sans',sans-serif;font-size:19.5px;line-height:19.5px;color:#222222;font-weight:bold;font-style:italic;">0.11%</div><div style="position:absolute;right:610.10px;top:608.19px;white-space:pre;font-family:'Liberation Sans',sans-serif;font-size:19.5px;line-height:19.5px;color:#222222;font-weight:bold;font-style:italic;">0.01%</div><div style="position:absolute;right:350.10px;top:608.19px;white-space:pre;font-family:'Liberation Sans',sans-serif;font-size:19.5px;line-height:19.5px;color:#222222;font-weight:bold;font-style:italic;">0.02%</div><div style="position:absolute;left:261px;top:725.7px;width:1953.4px;height:2.2px;background:#3a3a3a;"></div><div style="position:absolute;left:261px;top:755.7px;width:1953.4px;height:2.2px;background:#3a3a3a;"></div><div style="position:absolute;left:261px;top:814.7px;width:1953.4px;height:4.4px;background:#000;"></div><div style="position:absolute;left:262.40px;top:643.49px;white-space:pre;font-family:'Liberation Sans',sans-serif;font-size:19.5px;line-height:19.5px;color:#222222;font-weight:bold;transform:scaleX(0.9860);transform-origin:0 0;">Retail CD (6 Mo's to 1 Yr)</div><div style="position:absolute;left:271.60px;top:673.19px;white-space:pre;font-family:'Liberation Sans',sans-serif;font-size:19.5px;line-height:19.5px;color:#3f3f3f;font-weight:normal;font-style:italic;transform:scaleX(0.9812);transform-origin:0 0;-webkit-text-stroke:0.25px #3f3f3f;">FTP Income</div><div style="position:absolute;left:271.60px;top:703.19px;white-space:pre;font-family:'Liberation Sans',sans-serif;font-size:19.5px;line-height:19.5px;color:#3f3f3f;font-weight:normal;font-style:italic;transform:scaleX(1.0256);transform-origin:0 0;-webkit-text-stroke:0.25px #3f3f3f;">Interest Rate</div><div style="position:absolute;left:276.60px;top:733.19px;white-space:pre;font-family:'Liberation Sans',sans-serif;font-size:19.5px;line-height:19.5px;color:#222222;font-weight:bold;font-style:italic;transform:scaleX(1.0248);transform-origin:0 0;">Net Interest Margin</div><div style="position:absolute;left:261.20px;top:763.19px;white-space:pre;font-family:'Liberation Sans',sans-serif;font-size:19.5px;line-height:19.5px;color:#3f3f3f;font-weight:normal;transform:scaleX(0.9706);transform-origin:0 0;-webkit-text-stroke:0.25px #3f3f3f;">Doc Fees</div><div style="position:absolute;left:277.20px;top:793.19px;white-space:pre;font-family:'Liberation Sans',sans-serif;font-size:19.5px;line-height:19.5px;color:#222222;font-weight:bold;font-style:italic;transform:scaleX(0.9169);transform-origin:0 0;">Doc Fees</div><div style="position:absolute;right:1935.80px;top:643.49px;white-space:pre;font-family:'Liberation Sans',sans-serif;font-size:19.5px;line-height:19.5px;color:#222222;font-weight:bold;transform:scaleX(1.0300);transform-origin:100% 0;">348,630</div><div style="position:absolute;right:1803.80px;top:643.49px;white-space:pre;font-family:'Liberation Sans',sans-serif;font-size:19.5px;line-height:19.5px;color:#222222;font-weight:bold;transform:scaleX(1.0300);transform-origin:100% 0;">331,139</div><div style="position:absolute;right:1539.80px;top:643.49px;white-space:pre;font-family:'Liberation Sans',sans-serif;font-size:19.5px;line-height:19.5px;color:#222222;font-weight:bold;transform:scaleX(1.0300);transform-origin:100% 0;">132,015</div><div style="position:absolute;right:1407.80px;top:643.49px;white-space:pre;font-family:'Liberation Sans',sans-serif;font-size:19.5px;line-height:19.5px;color:#222222;font-weight:bold;transform:scaleX(1.0300);transform-origin:100% 0;">192,958</div><div style="position:absolute;right:1275.80px;top:643.49px;white-space:pre;font-family:'Liberation Sans',sans-serif;font-size:19.5px;line-height:19.5px;color:#222222;font-weight:bold;transform:scaleX(1.0300);transform-origin:100% 0;">55,112</div><div style="position:absolute;right:1143.80px;top:643.49px;white-space:pre;font-family:'Liberation Sans',sans-serif;font-size:19.5px;line-height:19.5px;color:#222222;font-weight:bold;transform:scaleX(1.0300);transform-origin:100% 0;">211,665</div><div style="position:absolute;right:1011.80px;top:643.49px;white-space:pre;font-family:'Liberation Sans',sans-serif;font-size:19.5px;line-height:19.5px;color:#222222;font-weight:bold;transform:scaleX(1.0300);transform-origin:100% 0;">59,000</div><div style="position:absolute;right:879.80px;top:643.49px;white-space:pre;font-family:'Liberation Sans',sans-serif;font-size:19.5px;line-height:19.5px;color:#222222;font-weight:bold;transform:scaleX(1.0300);transform-origin:100% 0;">15,000</div><div style="position:absolute;right:747.80px;top:643.49px;white-space:pre;font-family:'Liberation Sans',sans-serif;font-size:19.5px;line-height:19.5px;color:#222222;font-weight:bold;transform:scaleX(1.0300);transform-origin:100% 0;">75,016</div><div style="position:absolute;right:615.80px;top:643.49px;white-space:pre;font-family:'Liberation Sans',sans-serif;font-size:19.5px;line-height:19.5px;color:#222222;font-weight:bold;transform:scaleX(1.0300);transform-origin:100% 0;">52,000</div><div style="position:absolute;right:483.80px;top:643.49px;white-space:pre;font-family:'Liberation Sans',sans-serif;font-size:19.5px;line-height:19.5px;color:#222222;font-weight:bold;transform:scaleX(1.0300);transform-origin:100% 0;">163,229</div><div style="position:absolute;right:355.80px;top:643.49px;white-space:pre;font-family:'Liberation Sans',sans-serif;font-size:19.5px;line-height:19.5px;color:#222222;font-weight:bold;transform:scaleX(1.0300);transform-origin:100% 0;">1,635,765</div><div style="position:absolute;right:1930.10px;top:673.19px;white-space:pre;font-family:'Liberation Sans',sans-serif;font-size:19.5px;line-height:19.5px;color:#3f3f3f;font-weight:normal;font-style:italic;-webkit-text-stroke:0.25px #3f3f3f;">2.64%</div><div style="position:absolute;right:1798.10px;top:673.19px;white-space:pre;font-family:'Liberation Sans',sans-serif;font-size:19.5px;line-height:19.5px;color:#3f3f3f;font-weight:normal;font-style:italic;-webkit-text-stroke:0.25px #3f3f3f;">2.42%</div><div style="position:absolute;right:1534.10px;top:673.19px;white-space:pre;font-family:'Liberation Sans',sans-serif;font-size:19.5px;line-height:19.5px;color:#3f3f3f;font-weight:normal;font-style:italic;-webkit-text-stroke:0.25px #3f3f3f;">2.33%</div><div style="position:absolute;right:1402.10px;top:673.19px;white-space:pre;font-family:'Liberation Sans',sans-serif;font-size:19.5px;line-height:19.5px;color:#3f3f3f;font-weight:normal;font-style:italic;-webkit-text-stroke:0.25px #3f3f3f;">2.07%</div><div style="position:absolute;right:1270.10px;top:673.19px;white-space:pre;font-family:'Liberation Sans',sans-serif;font-size:19.5px;line-height:19.5px;color:#3f3f3f;font-weight:normal;font-style:italic;-webkit-text-stroke:0.25px #3f3f3f;">1.88%</div><div style="position:absolute;right:1138.10px;top:673.19px;white-space:pre;font-family:'Liberation Sans',sans-serif;font-size:19.5px;line-height:19.5px;color:#3f3f3f;font-weight:normal;font-style:italic;-webkit-text-stroke:0.25px #3f3f3f;">2.24%</div><div style="position:absolute;right:1006.10px;top:673.19px;white-space:pre;font-family:'Liberation Sans',sans-serif;font-size:19.5px;line-height:19.5px;color:#3f3f3f;font-weight:normal;font-style:italic;-webkit-text-stroke:0.25px #3f3f3f;">2.02%</div><div style="position:absolute;right:874.10px;top:673.19px;white-space:pre;font-family:'Liberation Sans',sans-serif;font-size:19.5px;line-height:19.5px;color:#3f3f3f;font-weight:normal;font-style:italic;-webkit-text-stroke:0.25px #3f3f3f;">2.16%</div><div style="position:absolute;right:742.10px;top:673.19px;white-space:pre;font-family:'Liberation Sans',sans-serif;font-size:19.5px;line-height:19.5px;color:#3f3f3f;font-weight:normal;font-style:italic;-webkit-text-stroke:0.25px #3f3f3f;">2.00%</div><div style="position:absolute;right:610.10px;top:673.19px;white-space:pre;font-family:'Liberation Sans',sans-serif;font-size:19.5px;line-height:19.5px;color:#3f3f3f;font-weight:normal;font-style:italic;-webkit-text-stroke:0.25px #3f3f3f;">1.72%</div><div style="position:absolute;right:478.10px;top:673.19px;white-space:pre;font-family:'Liberation Sans',sans-serif;font-size:19.5px;line-height:19.5px;color:#3f3f3f;font-weight:normal;font-style:italic;-webkit-text-stroke:0.25px #3f3f3f;">1.82%</div><div style="position:absolute;right:350.10px;top:673.19px;white-space:pre;font-family:'Liberation Sans',sans-serif;font-size:19.5px;line-height:19.5px;color:#3f3f3f;font-weight:normal;font-style:italic;-webkit-text-stroke:0.25px #3f3f3f;">2.26%</div><div style="position:absolute;right:1930.10px;top:703.19px;white-space:pre;font-family:'Liberation Sans',sans-serif;font-size:19.5px;line-height:19.5px;color:#3f3f3f;font-weight:normal;font-style:italic;-webkit-text-stroke:0.25px #3f3f3f;">2.33%</div><div style="position:absolute;right:1798.10px;top:703.19px;white-space:pre;font-family:'Liberation Sans',sans-serif;font-size:19.5px;line-height:19.5px;color:#3f3f3f;font-weight:normal;font-style:italic;-webkit-text-stroke:0.25px #3f3f3f;">2.39%</div><div style="position:absolute;right:1534.10px;top:703.19px;white-space:pre;font-family:'Liberation Sans',sans-serif;font-size:19.5px;line-height:19.5px;color:#3f3f3f;font-weight:normal;font-style:italic;-webkit-text-stroke:0.25px #3f3f3f;">2.01%</div><div style="position:absolute;right:1402.10px;top:703.19px;white-space:pre;font-family:'Liberation Sans',sans-serif;font-size:19.5px;line-height:19.5px;color:#3f3f3f;font-weight:normal;font-style:italic;-webkit-text-stroke:0.25px #3f3f3f;">1.87%</div><div style="position:absolute;right:1270.10px;top:703.19px;white-space:pre;font-family:'Liberation Sans',sans-serif;font-size:19.5px;line-height:19.5px;color:#3f3f3f;font-weight:normal;font-style:italic;-webkit-text-stroke:0.25px #3f3f3f;">1.63%</div><div style="position:absolute;right:1138.10px;top:703.19px;white-space:pre;font-family:'Liberation Sans',sans-serif;font-size:19.5px;line-height:19.5px;color:#3f3f3f;font-weight:normal;font-style:italic;-webkit-text-stroke:0.25px #3f3f3f;">1.69%</div><div style="position:absolute;right:1006.10px;top:703.19px;white-space:pre;font-family:'Liberation Sans',sans-serif;font-size:19.5px;line-height:19.5px;color:#3f3f3f;font-weight:normal;font-style:italic;-webkit-text-stroke:0.25px #3f3f3f;">1.96%</div><div style="position:absolute;right:874.10px;top:703.19px;white-space:pre;font-family:'Liberation Sans',sans-serif;font-size:19.5px;line-height:19.5px;color:#3f3f3f;font-weight:normal;font-style:italic;-webkit-text-stroke:0.25px #3f3f3f;">1.60%</div><div style="position:absolute;right:742.10px;top:703.19px;white-space:pre;font-family:'Liberation Sans',sans-serif;font-size:19.5px;line-height:19.5px;color:#3f3f3f;font-weight:normal;font-style:italic;-webkit-text-stroke:0.25px #3f3f3f;">1.18%</div><div style="position:absolute;right:610.10px;top:703.19px;white-space:pre;font-family:'Liberation Sans',sans-serif;font-size:19.5px;line-height:19.5px;color:#3f3f3f;font-weight:normal;font-style:italic;-webkit-text-stroke:0.25px #3f3f3f;">0.85%</div><div style="position:absolute;right:478.10px;top:703.19px;white-space:pre;font-family:'Liberation Sans',sans-serif;font-size:19.5px;line-height:19.5px;color:#3f3f3f;font-weight:normal;font-style:italic;-webkit-text-stroke:0.25px #3f3f3f;">1.15%</div><div style="position:absolute;right:350.10px;top:703.19px;white-space:pre;font-family:'Liberation Sans',sans-serif;font-size:19.5px;line-height:19.5px;color:#3f3f3f;font-weight:normal;font-style:italic;-webkit-text-stroke:0.25px #3f3f3f;">1.92%</div><div style="position:absolute;right:1930.10px;top:733.19px;white-space:pre;font-family:'Liberation Sans',sans-serif;font-size:19.5px;line-height:19.5px;color:#222222;font-weight:bold;font-style:italic;">0.31%</div><div style="position:absolute;right:1798.10px;top:733.19px;white-space:pre;font-family:'Liberation Sans',sans-serif;font-size:19.5px;line-height:19.5px;color:#222222;font-weight:bold;font-style:italic;">0.03%</div><div style="position:absolute;right:1534.10px;top:733.19px;white-space:pre;font-family:'Liberation Sans',sans-serif;font-size:19.5px;line-height:19.5px;color:#222222;font-weight:bold;font-style:italic;">0.32%</div><div style="position:absolute;right:1402.10px;top:733.19px;white-space:pre;font-family:'Liberation Sans',sans-serif;font-size:19.5px;line-height:19.5px;color:#222222;font-weight:bold;font-style:italic;">0.20%</div><div style="position:absolute;right:1270.10px;top:733.19px;white-space:pre;font-family:'Liberation Sans',sans-serif;font-size:19.5px;line-height:19.5px;color:#222222;font-weight:bold;font-style:italic;">0.26%</div><div style="position:absolute;right:1138.10px;top:733.19px;white-space:pre;font-family:'Liberation Sans',sans-serif;font-size:19.5px;line-height:19.5px;color:#222222;font-weight:bold;font-style:italic;">0.55%</div><div style="position:absolute;right:1006.10px;top:733.19px;white-space:pre;font-family:'Liberation Sans',sans-serif;font-size:19.5px;line-height:19.5px;color:#222222;font-weight:bold;font-style:italic;">0.06%</div><div style="position:absolute;right:874.10px;top:733.19px;white-space:pre;font-family:'Liberation Sans',sans-serif;font-size:19.5px;line-height:19.5px;color:#222222;font-weight:bold;font-style:italic;">0.57%</div><div style="position:absolute;right:742.10px;top:733.19px;white-space:pre;font-family:'Liberation Sans',sans-serif;font-size:19.5px;line-height:19.5px;color:#222222;font-weight:bold;font-style:italic;">0.82%</div><div style="position:absolute;right:610.10px;top:733.19px;white-space:pre;font-family:'Liberation Sans',sans-serif;font-size:19.5px;line-height:19.5px;color:#222222;font-weight:bold;font-style:italic;">0.87%</div><div style="position:absolute;right:478.10px;top:733.19px;white-space:pre;font-family:'Liberation Sans',sans-serif;font-size:19.5px;line-height:19.5px;color:#222222;font-weight:bold;font-style:italic;">0.66%</div><div style="position:absolute;right:350.10px;top:733.19px;white-space:pre;font-family:'Liberation Sans',sans-serif;font-size:19.5px;line-height:19.5px;color:#222222;font-weight:bold;font-style:italic;">0.34%</div><div style="position:absolute;right:1935.80px;top:763.19px;white-space:pre;font-family:'Liberation Sans',sans-serif;font-size:19.5px;line-height:19.5px;color:#3f3f3f;font-weight:normal;transform:scaleX(1.0300);transform-origin:100% 0;-webkit-text-stroke:0.25px #3f3f3f;">195</div><div style="position:absolute;right:1803.80px;top:763.19px;white-space:pre;font-family:'Liberation Sans',sans-serif;font-size:19.5px;line-height:19.5px;color:#3f3f3f;font-weight:normal;transform:scaleX(1.0300);transform-origin:100% 0;-webkit-text-stroke:0.25px #3f3f3f;">105</div><div style="position:absolute;right:1539.80px;top:763.19px;white-space:pre;font-family:'Liberation Sans',sans-serif;font-size:19.5px;line-height:19.5px;color:#3f3f3f;font-weight:normal;transform:scaleX(1.0300);transform-origin:100% 0;-webkit-text-stroke:0.25px #3f3f3f;">60</div><div style="position:absolute;right:1407.80px;top:763.19px;white-space:pre;font-family:'Liberation Sans',sans-serif;font-size:19.5px;line-height:19.5px;color:#3f3f3f;font-weight:normal;transform:scaleX(1.0300);transform-origin:100% 0;-webkit-text-stroke:0.25px #3f3f3f;">75</div><div style="position:absolute;right:1275.80px;top:763.19px;white-space:pre;font-family:'Liberation Sans',sans-serif;font-size:19.5px;line-height:19.5px;color:#3f3f3f;font-weight:normal;transform:scaleX(1.0300);transform-origin:100% 0;-webkit-text-stroke:0.25px #3f3f3f;">45</div><div style="position:absolute;right:1143.80px;top:763.19px;white-space:pre;font-family:'Liberation Sans',sans-serif;font-size:19.5px;line-height:19.5px;color:#3f3f3f;font-weight:normal;transform:scaleX(1.0300);transform-origin:100% 0;-webkit-text-stroke:0.25px #3f3f3f;">105</div><div style="position:absolute;right:1011.80px;top:763.19px;white-space:pre;font-family:'Liberation Sans',sans-serif;font-size:19.5px;line-height:19.5px;color:#3f3f3f;font-weight:normal;transform:scaleX(1.0300);transform-origin:100% 0;-webkit-text-stroke:0.25px #3f3f3f;">30</div><div style="position:absolute;right:879.80px;top:763.19px;white-space:pre;font-family:'Liberation Sans',sans-serif;font-size:19.5px;line-height:19.5px;color:#3f3f3f;font-weight:normal;transform:scaleX(1.0300);transform-origin:100% 0;-webkit-text-stroke:0.25px #3f3f3f;">15</div><div style="position:absolute;right:747.80px;top:763.19px;white-space:pre;font-family:'Liberation Sans',sans-serif;font-size:19.5px;line-height:19.5px;color:#3f3f3f;font-weight:normal;transform:scaleX(1.0300);transform-origin:100% 0;-webkit-text-stroke:0.25px #3f3f3f;">45</div><div style="position:absolute;right:615.80px;top:763.19px;white-space:pre;font-family:'Liberation Sans',sans-serif;font-size:19.5px;line-height:19.5px;color:#3f3f3f;font-weight:normal;transform:scaleX(1.0300);transform-origin:100% 0;-webkit-text-stroke:0.25px #3f3f3f;">30</div><div style="position:absolute;right:483.80px;top:763.19px;white-space:pre;font-family:'Liberation Sans',sans-serif;font-size:19.5px;line-height:19.5px;color:#3f3f3f;font-weight:normal;transform:scaleX(1.0300);transform-origin:100% 0;-webkit-text-stroke:0.25px #3f3f3f;">45</div><div style="position:absolute;right:355.80px;top:763.19px;white-space:pre;font-family:'Liberation Sans',sans-serif;font-size:19.5px;line-height:19.5px;color:#3f3f3f;font-weight:normal;transform:scaleX(1.0300);transform-origin:100% 0;-webkit-text-stroke:0.25px #3f3f3f;">750</div><div style="position:absolute;right:1930.10px;top:793.19px;white-space:pre;font-family:'Liberation Sans',sans-serif;font-size:19.5px;line-height:19.5px;color:#222222;font-weight:bold;font-style:italic;">0.06%</div><div style="position:absolute;right:1798.10px;top:793.19px;white-space:pre;font-family:'Liberation Sans',sans-serif;font-size:19.5px;line-height:19.5px;color:#222222;font-weight:bold;font-style:italic;">0.03%</div><div style="position:absolute;right:1534.10px;top:793.19px;white-space:pre;font-family:'Liberation Sans',sans-serif;font-size:19.5px;line-height:19.5px;color:#222222;font-weight:bold;font-style:italic;">0.05%</div><div style="position:absolute;right:1402.10px;top:793.19px;white-space:pre;font-family:'Liberation Sans',sans-serif;font-size:19.5px;line-height:19.5px;color:#222222;font-weight:bold;font-style:italic;">0.04%</div><div style="position:absolute;right:1270.10px;top:793.19px;white-space:pre;font-family:'Liberation Sans',sans-serif;font-size:19.5px;line-height:19.5px;color:#222222;font-weight:bold;font-style:italic;">0.08%</div><div style="position:absolute;right:1138.10px;top:793.19px;white-space:pre;font-family:'Liberation Sans',sans-serif;font-size:19.5px;line-height:19.5px;color:#222222;font-weight:bold;font-style:italic;">0.05%</div><div style="position:absolute;right:1006.10px;top:793.19px;white-space:pre;font-family:'Liberation Sans',sans-serif;font-size:19.5px;line-height:19.5px;color:#222222;font-weight:bold;font-style:italic;">0.05%</div><div style="position:absolute;right:874.10px;top:793.19px;white-space:pre;font-family:'Liberation Sans',sans-serif;font-size:19.5px;line-height:19.5px;color:#222222;font-weight:bold;font-style:italic;">0.10%</div><div style="position:absolute;right:742.10px;top:793.19px;white-space:pre;font-family:'Liberation Sans',sans-serif;font-size:19.5px;line-height:19.5px;color:#222222;font-weight:bold;font-style:italic;">0.06%</div><div style="position:absolute;right:610.10px;top:793.19px;white-space:pre;font-family:'Liberation Sans',sans-serif;font-size:19.5px;line-height:19.5px;color:#222222;font-weight:bold;font-style:italic;">0.06%</div><div style="position:absolute;right:478.10px;top:793.19px;white-space:pre;font-family:'Liberation Sans',sans-serif;font-size:19.5px;line-height:19.5px;color:#222222;font-weight:bold;font-style:italic;">0.03%</div><div style="position:absolute;right:350.10px;top:793.19px;white-space:pre;font-family:'Liberation Sans',sans-serif;font-size:19.5px;line-height:19.5px;color:#222222;font-weight:bold;font-style:italic;">0.05%</div><div style="position:absolute;left:261px;top:914.7px;width:1953.4px;height:2.2px;background:#3a3a3a;"></div><div style="position:absolute;left:261px;top:944.7px;width:1953.4px;height:2.2px;background:#3a3a3a;"></div><div style="position:absolute;left:261px;top:1003.7px;width:1953.4px;height:4.4px;background:#000;"></div><div style="position:absolute;left:262.40px;top:832.49px;white-space:pre;font-family:'Liberation Sans',sans-serif;font-size:19.5px;line-height:19.5px;color:#222222;font-weight:bold;transform:scaleX(0.9692);transform-origin:0 0;">Retail CD (&gt; 1 Year)</div><div style="position:absolute;left:271.60px;top:862.19px;white-space:pre;font-family:'Liberation Sans',sans-serif;font-size:19.5px;line-height:19.5px;color:#3f3f3f;font-weight:normal;font-style:italic;transform:scaleX(0.9812);transform-origin:0 0;-webkit-text-stroke:0.25px #3f3f3f;">FTP Income</div><div style="position:absolute;left:271.60px;top:892.19px;white-space:pre;font-family:'Liberation Sans',sans-serif;font-size:19.5px;line-height:19.5px;color:#3f3f3f;font-weight:normal;font-style:italic;transform:scaleX(1.0256);transform-origin:0 0;-webkit-text-stroke:0.25px #3f3f3f;">Interest Rate</div><div style="position:absolute;left:276.60px;top:922.19px;white-space:pre;font-family:'Liberation Sans',sans-serif;font-size:19.5px;line-height:19.5px;color:#222222;font-weight:bold;font-style:italic;transform:scaleX(1.0248);transform-origin:0 0;">Net Interest Margin</div><div style="position:absolute;left:261.20px;top:952.19px;white-space:pre;font-family:'Liberation Sans',sans-serif;font-size:19.5px;line-height:19.5px;color:#3f3f3f;font-weight:normal;transform:scaleX(0.9706);transform-origin:0 0;-webkit-text-stroke:0.25px #3f3f3f;">Doc Fees</div><div style="position:absolute;left:277.20px;top:982.19px;white-space:pre;font-family:'Liberation Sans',sans-serif;font-size:19.5px;line-height:19.5px;color:#222222;font-weight:bold;font-style:italic;transform:scaleX(0.9169);transform-origin:0 0;">Doc Fees</div><div style="position:absolute;right:1935.80px;top:832.49px;white-space:pre;font-family:'Liberation Sans',sans-serif;font-size:19.5px;line-height:19.5px;color:#222222;font-weight:bold;transform:scaleX(1.0300);transform-origin:100% 0;">10,000</div><div style="position:absolute;right:1803.80px;top:832.49px;white-space:pre;font-family:'Liberation Sans',sans-serif;font-size:19.5px;line-height:19.5px;color:#222222;font-weight:bold;transform:scaleX(1.0300);transform-origin:100% 0;">50,000</div><div style="position:absolute;right:1407.80px;top:832.49px;white-space:pre;font-family:'Liberation Sans',sans-serif;font-size:19.5px;line-height:19.5px;color:#222222;font-weight:bold;transform:scaleX(1.0300);transform-origin:100% 0;">190,000</div><div style="position:absolute;right:1275.80px;top:832.49px;white-space:pre;font-family:'Liberation Sans',sans-serif;font-size:19.5px;line-height:19.5px;color:#222222;font-weight:bold;transform:scaleX(1.0300);transform-origin:100% 0;">25,000</div><div style="position:absolute;right:1143.80px;top:832.49px;white-space:pre;font-family:'Liberation Sans',sans-serif;font-size:19.5px;line-height:19.5px;color:#222222;font-weight:bold;transform:scaleX(1.0300);transform-origin:100% 0;">66,797</div><div style="position:absolute;right:1011.80px;top:832.49px;white-space:pre;font-family:'Liberation Sans',sans-serif;font-size:19.5px;line-height:19.5px;color:#222222;font-weight:bold;transform:scaleX(1.0300);transform-origin:100% 0;">70,000</div><div style="position:absolute;right:879.80px;top:832.49px;white-space:pre;font-family:'Liberation Sans',sans-serif;font-size:19.5px;line-height:19.5px;color:#222222;font-weight:bold;transform:scaleX(1.0300);transform-origin:100% 0;">168,876</div><div style="position:absolute;right:747.80px;top:832.49px;white-space:pre;font-family:'Liberation Sans',sans-serif;font-size:19.5px;line-height:19.5px;color:#222222;font-weight:bold;transform:scaleX(1.0300);transform-origin:100% 0;">20,700</div><div style="position:absolute;right:615.80px;top:832.49px;white-space:pre;font-family:'Liberation Sans',sans-serif;font-size:19.5px;line-height:19.5px;color:#222222;font-weight:bold;transform:scaleX(1.0300);transform-origin:100% 0;">180,620</div><div style="position:absolute;right:483.80px;top:832.49px;white-space:pre;font-family:'Liberation Sans',sans-serif;font-size:19.5px;line-height:19.5px;color:#222222;font-weight:bold;transform:scaleX(1.0300);transform-origin:100% 0;">12,988</div><div style="position:absolute;right:355.80px;top:832.49px;white-space:pre;font-family:'Liberation Sans',sans-serif;font-size:19.5px;line-height:19.5px;color:#222222;font-weight:bold;transform:scaleX(1.0300);transform-origin:100% 0;">794,981</div><div style="position:absolute;right:1930.10px;top:862.19px;white-space:pre;font-family:'Liberation Sans',sans-serif;font-size:19.5px;line-height:19.5px;color:#3f3f3f;font-weight:normal;font-style:italic;-webkit-text-stroke:0.25px #3f3f3f;">2.84%</div><div style="position:absolute;right:1798.10px;top:862.19px;white-space:pre;font-family:'Liberation Sans',sans-serif;font-size:19.5px;line-height:19.5px;color:#3f3f3f;font-weight:normal;font-style:italic;-webkit-text-stroke:0.25px #3f3f3f;">2.80%</div><div style="position:absolute;right:1402.10px;top:862.19px;white-space:pre;font-family:'Liberation Sans',sans-serif;font-size:19.5px;line-height:19.5px;color:#3f3f3f;font-weight:normal;font-style:italic;-webkit-text-stroke:0.25px #3f3f3f;">2.52%</div><div style="position:absolute;right:1270.10px;top:862.19px;white-space:pre;font-family:'Liberation Sans',sans-serif;font-size:19.5px;line-height:19.5px;color:#3f3f3f;font-weight:normal;font-style:italic;-webkit-text-stroke:0.25px #3f3f3f;">2.62%</div><div style="position:absolute;right:1138.10px;top:862.19px;white-space:pre;font-family:'Liberation Sans',sans-serif;font-size:19.5px;line-height:19.5px;color:#3f3f3f;font-weight:normal;font-style:italic;-webkit-text-stroke:0.25px #3f3f3f;">2.63%</div><div style="position:absolute;right:1006.10px;top:862.19px;white-space:pre;font-family:'Liberation Sans',sans-serif;font-size:19.5px;line-height:19.5px;color:#3f3f3f;font-weight:normal;font-style:italic;-webkit-text-stroke:0.25px #3f3f3f;">2.33%</div><div style="position:absolute;right:874.10px;top:862.19px;white-space:pre;font-family:'Liberation Sans',sans-serif;font-size:19.5px;line-height:19.5px;color:#3f3f3f;font-weight:normal;font-style:italic;-webkit-text-stroke:0.25px #3f3f3f;">2.35%</div><div style="position:absolute;right:742.10px;top:862.19px;white-space:pre;font-family:'Liberation Sans',sans-serif;font-size:19.5px;line-height:19.5px;color:#3f3f3f;font-weight:normal;font-style:italic;-webkit-text-stroke:0.25px #3f3f3f;">2.56%</div><div style="position:absolute;right:610.10px;top:862.19px;white-space:pre;font-family:'Liberation Sans',sans-serif;font-size:19.5px;line-height:19.5px;color:#3f3f3f;font-weight:normal;font-style:italic;-webkit-text-stroke:0.25px #3f3f3f;">2.15%</div><div style="position:absolute;right:478.10px;top:862.19px;white-space:pre;font-family:'Liberation Sans',sans-serif;font-size:19.5px;line-height:19.5px;color:#3f3f3f;font-weight:normal;font-style:italic;-webkit-text-stroke:0.25px #3f3f3f;">2.37%</div><div style="position:absolute;right:350.10px;top:862.19px;white-space:pre;font-family:'Liberation Sans',sans-serif;font-size:19.5px;line-height:19.5px;color:#3f3f3f;font-weight:normal;font-style:italic;-webkit-text-stroke:0.25px #3f3f3f;">2.42%</div><div style="position:absolute;right:1930.10px;top:892.19px;white-space:pre;font-family:'Liberation Sans',sans-serif;font-size:19.5px;line-height:19.5px;color:#3f3f3f;font-weight:normal;font-style:italic;-webkit-text-stroke:0.25px #3f3f3f;">2.45%</div><div style="position:absolute;right:1798.10px;top:892.19px;white-space:pre;font-family:'Liberation Sans',sans-serif;font-size:19.5px;line-height:19.5px;color:#3f3f3f;font-weight:normal;font-style:italic;-webkit-text-stroke:0.25px #3f3f3f;">2.45%</div><div style="position:absolute;right:1402.10px;top:892.19px;white-space:pre;font-family:'Liberation Sans',sans-serif;font-size:19.5px;line-height:19.5px;color:#3f3f3f;font-weight:normal;font-style:italic;-webkit-text-stroke:0.25px #3f3f3f;">2.03%</div><div style="position:absolute;right:1270.10px;top:892.19px;white-space:pre;font-family:'Liberation Sans',sans-serif;font-size:19.5px;line-height:19.5px;color:#3f3f3f;font-weight:normal;font-style:italic;-webkit-text-stroke:0.25px #3f3f3f;">2.02%</div><div style="position:absolute;right:1138.10px;top:892.19px;white-space:pre;font-family:'Liberation Sans',sans-serif;font-size:19.5px;line-height:19.5px;color:#3f3f3f;font-weight:normal;font-style:italic;-webkit-text-stroke:0.25px #3f3f3f;">1.98%</div><div style="position:absolute;right:1006.10px;top:892.19px;white-space:pre;font-family:'Liberation Sans',sans-serif;font-size:19.5px;line-height:19.5px;color:#3f3f3f;font-weight:normal;font-style:italic;-webkit-text-stroke:0.25px #3f3f3f;">1.96%</div><div style="position:absolute;right:874.10px;top:892.19px;white-space:pre;font-family:'Liberation Sans',sans-serif;font-size:19.5px;line-height:19.5px;color:#3f3f3f;font-weight:normal;font-style:italic;-webkit-text-stroke:0.25px #3f3f3f;">1.83%</div><div style="position:absolute;right:742.10px;top:892.19px;white-space:pre;font-family:'Liberation Sans',sans-serif;font-size:19.5px;line-height:19.5px;color:#3f3f3f;font-weight:normal;font-style:italic;-webkit-text-stroke:0.25px #3f3f3f;">1.64%</div><div style="position:absolute;right:610.10px;top:892.19px;white-space:pre;font-family:'Liberation Sans',sans-serif;font-size:19.5px;line-height:19.5px;color:#3f3f3f;font-weight:normal;font-style:italic;-webkit-text-stroke:0.25px #3f3f3f;">1.56%</div><div style="position:absolute;right:478.10px;top:892.19px;white-space:pre;font-family:'Liberation Sans',sans-serif;font-size:19.5px;line-height:19.5px;color:#3f3f3f;font-weight:normal;font-style:italic;-webkit-text-stroke:0.25px #3f3f3f;">1.56%</div><div style="position:absolute;right:350.10px;top:892.19px;white-space:pre;font-family:'Liberation Sans',sans-serif;font-size:19.5px;line-height:19.5px;color:#3f3f3f;font-weight:normal;font-style:italic;-webkit-text-stroke:0.25px #3f3f3f;">1.88%</div><div style="position:absolute;right:1930.10px;top:922.19px;white-space:pre;font-family:'Liberation Sans',sans-serif;font-size:19.5px;line-height:19.5px;color:#222222;font-weight:bold;font-style:italic;">0.39%</div><div style="position:absolute;right:1798.10px;top:922.19px;white-space:pre;font-family:'Liberation Sans',sans-serif;font-size:19.5px;line-height:19.5px;color:#222222;font-weight:bold;font-style:italic;">0.35%</div><div style="position:absolute;right:1402.10px;top:922.19px;white-space:pre;font-family:'Liberation Sans',sans-serif;font-size:19.5px;line-height:19.5px;color:#222222;font-weight:bold;font-style:italic;">0.50%</div><div style="position:absolute;right:1270.10px;top:922.19px;white-space:pre;font-family:'Liberation Sans',sans-serif;font-size:19.5px;line-height:19.5px;color:#222222;font-weight:bold;font-style:italic;">0.61%</div><div style="position:absolute;right:1138.10px;top:922.19px;white-space:pre;font-family:'Liberation Sans',sans-serif;font-size:19.5px;line-height:19.5px;color:#222222;font-weight:bold;font-style:italic;">0.66%</div><div style="position:absolute;right:1006.10px;top:922.19px;white-space:pre;font-family:'Liberation Sans',sans-serif;font-size:19.5px;line-height:19.5px;color:#222222;font-weight:bold;font-style:italic;">0.38%</div><div style="position:absolute;right:874.10px;top:922.19px;white-space:pre;font-family:'Liberation Sans',sans-serif;font-size:19.5px;line-height:19.5px;color:#222222;font-weight:bold;font-style:italic;">0.52%</div><div style="position:absolute;right:742.10px;top:922.19px;white-space:pre;font-family:'Liberation Sans',sans-serif;font-size:19.5px;line-height:19.5px;color:#222222;font-weight:bold;font-style:italic;">0.92%</div><div style="position:absolute;right:610.10px;top:922.19px;white-space:pre;font-family:'Liberation Sans',sans-serif;font-size:19.5px;line-height:19.5px;color:#222222;font-weight:bold;font-style:italic;">0.59%</div><div style="position:absolute;right:478.10px;top:922.19px;white-space:pre;font-family:'Liberation Sans',sans-serif;font-size:19.5px;line-height:19.5px;color:#222222;font-weight:bold;font-style:italic;">0.82%</div><div style="position:absolute;right:350.10px;top:922.19px;white-space:pre;font-family:'Liberation Sans',sans-serif;font-size:19.5px;line-height:19.5px;color:#222222;font-weight:bold;font-style:italic;">0.53%</div><div style="position:absolute;right:1935.80px;top:952.19px;white-space:pre;font-family:'Liberation Sans',sans-serif;font-size:19.5px;line-height:19.5px;color:#3f3f3f;font-weight:normal;transform:scaleX(1.0300);transform-origin:100% 0;-webkit-text-stroke:0.25px #3f3f3f;">15</div><div style="position:absolute;right:1803.80px;top:952.19px;white-space:pre;font-family:'Liberation Sans',sans-serif;font-size:19.5px;line-height:19.5px;color:#3f3f3f;font-weight:normal;transform:scaleX(1.0300);transform-origin:100% 0;-webkit-text-stroke:0.25px #3f3f3f;">30</div><div style="position:absolute;right:1407.80px;top:952.19px;white-space:pre;font-family:'Liberation Sans',sans-serif;font-size:19.5px;line-height:19.5px;color:#3f3f3f;font-weight:normal;transform:scaleX(1.0300);transform-origin:100% 0;-webkit-text-stroke:0.25px #3f3f3f;">45</div><div style="position:absolute;right:1275.80px;top:952.19px;white-space:pre;font-family:'Liberation Sans',sans-serif;font-size:19.5px;line-height:19.5px;color:#3f3f3f;font-weight:normal;transform:scaleX(1.0300);transform-origin:100% 0;-webkit-text-stroke:0.25px #3f3f3f;">30</div><div style="position:absolute;right:1143.80px;top:952.19px;white-space:pre;font-family:'Liberation Sans',sans-serif;font-size:19.5px;line-height:19.5px;color:#3f3f3f;font-weight:normal;transform:scaleX(1.0300);transform-origin:100% 0;-webkit-text-stroke:0.25px #3f3f3f;">45</div><div style="position:absolute;right:1011.80px;top:952.19px;white-space:pre;font-family:'Liberation Sans',sans-serif;font-size:19.5px;line-height:19.5px;color:#3f3f3f;font-weight:normal;transform:scaleX(1.0300);transform-origin:100% 0;-webkit-text-stroke:0.25px #3f3f3f;">30</div><div style="position:absolute;right:879.80px;top:952.19px;white-space:pre;font-family:'Liberation Sans',sans-serif;font-size:19.5px;line-height:19.5px;color:#3f3f3f;font-weight:normal;transform:scaleX(1.0300);transform-origin:100% 0;-webkit-text-stroke:0.25px #3f3f3f;">90</div><div style="position:absolute;right:747.80px;top:952.19px;white-space:pre;font-family:'Liberation Sans',sans-serif;font-size:19.5px;line-height:19.5px;color:#3f3f3f;font-weight:normal;transform:scaleX(1.0300);transform-origin:100% 0;-webkit-text-stroke:0.25px #3f3f3f;">30</div><div style="position:absolute;right:615.80px;top:952.19px;white-space:pre;font-family:'Liberation Sans',sans-serif;font-size:19.5px;line-height:19.5px;color:#3f3f3f;font-weight:normal;transform:scaleX(1.0300);transform-origin:100% 0;-webkit-text-stroke:0.25px #3f3f3f;">90</div><div style="position:absolute;right:483.80px;top:952.19px;white-space:pre;font-family:'Liberation Sans',sans-serif;font-size:19.5px;line-height:19.5px;color:#3f3f3f;font-weight:normal;transform:scaleX(1.0300);transform-origin:100% 0;-webkit-text-stroke:0.25px #3f3f3f;">15</div><div style="position:absolute;right:355.80px;top:952.19px;white-space:pre;font-family:'Liberation Sans',sans-serif;font-size:19.5px;line-height:19.5px;color:#3f3f3f;font-weight:normal;transform:scaleX(1.0300);transform-origin:100% 0;-webkit-text-stroke:0.25px #3f3f3f;">420</div><div style="position:absolute;right:1930.10px;top:982.19px;white-space:pre;font-family:'Liberation Sans',sans-serif;font-size:19.5px;line-height:19.5px;color:#222222;font-weight:bold;font-style:italic;">0.15%</div><div style="position:absolute;right:1798.10px;top:982.19px;white-space:pre;font-family:'Liberation Sans',sans-serif;font-size:19.5px;line-height:19.5px;color:#222222;font-weight:bold;font-style:italic;">0.06%</div><div style="position:absolute;right:1402.10px;top:982.19px;white-space:pre;font-family:'Liberation Sans',sans-serif;font-size:19.5px;line-height:19.5px;color:#222222;font-weight:bold;font-style:italic;">0.02%</div><div style="position:absolute;right:1270.10px;top:982.19px;white-space:pre;font-family:'Liberation Sans',sans-serif;font-size:19.5px;line-height:19.5px;color:#222222;font-weight:bold;font-style:italic;">0.12%</div><div style="position:absolute;right:1138.10px;top:982.19px;white-space:pre;font-family:'Liberation Sans',sans-serif;font-size:19.5px;line-height:19.5px;color:#222222;font-weight:bold;font-style:italic;">0.07%</div><div style="position:absolute;right:1006.10px;top:982.19px;white-space:pre;font-family:'Liberation Sans',sans-serif;font-size:19.5px;line-height:19.5px;color:#222222;font-weight:bold;font-style:italic;">0.04%</div><div style="position:absolute;right:874.10px;top:982.19px;white-space:pre;font-family:'Liberation Sans',sans-serif;font-size:19.5px;line-height:19.5px;color:#222222;font-weight:bold;font-style:italic;">0.05%</div><div style="position:absolute;right:742.10px;top:982.19px;white-space:pre;font-family:'Liberation Sans',sans-serif;font-size:19.5px;line-height:19.5px;color:#222222;font-weight:bold;font-style:italic;">0.14%</div><div style="position:absolute;right:610.10px;top:982.19px;white-space:pre;font-family:'Liberation Sans',sans-serif;font-size:19.5px;line-height:19.5px;color:#222222;font-weight:bold;font-style:italic;">0.05%</div><div style="position:absolute;right:478.10px;top:982.19px;white-space:pre;font-family:'Liberation Sans',sans-serif;font-size:19.5px;line-height:19.5px;color:#222222;font-weight:bold;font-style:italic;">0.12%</div><div style="position:absolute;right:350.10px;top:982.19px;white-space:pre;font-family:'Liberation Sans',sans-serif;font-size:19.5px;line-height:19.5px;color:#222222;font-weight:bold;font-style:italic;">0.05%</div><div style="position:absolute;left:261px;top:1101.5px;width:1953.4px;height:2.2px;background:#3a3a3a;"></div><div style="position:absolute;left:261px;top:1131.5px;width:1953.4px;height:2.2px;background:#3a3a3a;"></div><div style="position:absolute;left:261px;top:1190.5px;width:1953.4px;height:4.4px;background:#000;"></div><div style="position:absolute;left:262.40px;top:1019.29px;white-space:pre;font-family:'Liberation Sans',sans-serif;font-size:19.5px;line-height:19.5px;color:#222222;font-weight:bold;transform:scaleX(0.9385);transform-origin:0 0;">Jumbo CD</div><div style="position:absolute;left:271.60px;top:1048.99px;white-space:pre;font-family:'Liberation Sans',sans-serif;font-size:19.5px;line-height:19.5px;color:#3f3f3f;font-weight:normal;font-style:italic;transform:scaleX(0.9812);transform-origin:0 0;-webkit-text-stroke:0.25px #3f3f3f;">FTP Income</div><div style="position:absolute;left:271.60px;top:1078.99px;white-space:pre;font-family:'Liberation Sans',sans-serif;font-size:19.5px;line-height:19.5px;color:#3f3f3f;font-weight:normal;font-style:italic;transform:scaleX(1.0256);transform-origin:0 0;-webkit-text-stroke:0.25px #3f3f3f;">Interest Rate</div><div style="position:absolute;left:276.60px;top:1108.99px;white-space:pre;font-family:'Liberation Sans',sans-serif;font-size:19.5px;line-height:19.5px;color:#222222;font-weight:bold;font-style:italic;transform:scaleX(1.0248);transform-origin:0 0;">Net Interest Margin</div><div style="position:absolute;left:261.20px;top:1138.99px;white-space:pre;font-family:'Liberation Sans',sans-serif;font-size:19.5px;line-height:19.5px;color:#3f3f3f;font-weight:normal;transform:scaleX(0.9706);transform-origin:0 0;-webkit-text-stroke:0.25px #3f3f3f;">Doc Fees</div><div style="position:absolute;left:277.20px;top:1168.99px;white-space:pre;font-family:'Liberation Sans',sans-serif;font-size:19.5px;line-height:19.5px;color:#222222;font-weight:bold;font-style:italic;transform:scaleX(0.9169);transform-origin:0 0;">Doc Fees</div><div style="position:absolute;right:1803.80px;top:1019.29px;white-space:pre;font-family:'Liberation Sans',sans-serif;font-size:19.5px;line-height:19.5px;color:#222222;font-weight:bold;transform:scaleX(1.0300);transform-origin:100% 0;">100,000</div><div style="position:absolute;right:355.80px;top:1019.29px;white-space:pre;font-family:'Liberation Sans',sans-serif;font-size:19.5px;line-height:19.5px;color:#222222;font-weight:bold;transform:scaleX(1.0300);transform-origin:100% 0;">100,000</div><div style="position:absolute;right:1798.10px;top:1048.99px;white-space:pre;font-family:'Liberation Sans',sans-serif;font-size:19.5px;line-height:19.5px;color:#3f3f3f;font-weight:normal;font-style:italic;-webkit-text-stroke:0.25px #3f3f3f;">2.21%</div><div style="position:absolute;right:350.10px;top:1048.99px;white-space:pre;font-family:'Liberation Sans',sans-serif;font-size:19.5px;line-height:19.5px;color:#3f3f3f;font-weight:normal;font-style:italic;-webkit-text-stroke:0.25px #3f3f3f;">2.21%</div><div style="position:absolute;right:1798.10px;top:1078.99px;white-space:pre;font-family:'Liberation Sans',sans-serif;font-size:19.5px;line-height:19.5px;color:#3f3f3f;font-weight:normal;font-style:italic;-webkit-text-stroke:0.25px #3f3f3f;">2.17%</div><div style="position:absolute;right:350.10px;top:1078.99px;white-space:pre;font-family:'Liberation Sans',sans-serif;font-size:19.5px;line-height:19.5px;color:#3f3f3f;font-weight:normal;font-style:italic;-webkit-text-stroke:0.25px #3f3f3f;">2.17%</div><div style="position:absolute;right:1798.10px;top:1108.99px;white-space:pre;font-family:'Liberation Sans',sans-serif;font-size:19.5px;line-height:19.5px;color:#222222;font-weight:bold;font-style:italic;">0.04%</div><div style="position:absolute;right:350.10px;top:1108.99px;white-space:pre;font-family:'Liberation Sans',sans-serif;font-size:19.5px;line-height:19.5px;color:#222222;font-weight:bold;font-style:italic;">0.04%</div><div style="position:absolute;right:1803.80px;top:1138.99px;white-space:pre;font-family:'Liberation Sans',sans-serif;font-size:19.5px;line-height:19.5px;color:#3f3f3f;font-weight:normal;transform:scaleX(1.0300);transform-origin:100% 0;-webkit-text-stroke:0.25px #3f3f3f;">15</div><div style="position:absolute;right:355.80px;top:1138.99px;white-space:pre;font-family:'Liberation Sans',sans-serif;font-size:19.5px;line-height:19.5px;color:#3f3f3f;font-weight:normal;transform:scaleX(1.0300);transform-origin:100% 0;-webkit-text-stroke:0.25px #3f3f3f;">15</div><div style="position:absolute;right:1798.10px;top:1168.99px;white-space:pre;font-family:'Liberation Sans',sans-serif;font-size:19.5px;line-height:19.5px;color:#222222;font-weight:bold;font-style:italic;">0.02%</div><div style="position:absolute;right:350.10px;top:1168.99px;white-space:pre;font-family:'Liberation Sans',sans-serif;font-size:19.5px;line-height:19.5px;color:#222222;font-weight:bold;font-style:italic;">0.02%</div><div style="position:absolute;left:261px;top:1286.5px;width:1953.4px;height:2.2px;background:#3a3a3a;"></div><div style="position:absolute;left:261px;top:1316.5px;width:1953.4px;height:2.2px;background:#3a3a3a;"></div><div style="position:absolute;left:261px;top:1375.5px;width:1953.4px;height:4.4px;background:#000;"></div><div style="position:absolute;left:262.40px;top:1204.29px;white-space:pre;font-family:'Liberation Sans',sans-serif;font-size:19.5px;line-height:19.5px;color:#222222;font-weight:bold;transform:scaleX(0.9526);transform-origin:0 0;">IRA</div><div style="position:absolute;left:271.60px;top:1233.99px;white-space:pre;font-family:'Liberation Sans',sans-serif;font-size:19.5px;line-height:19.5px;color:#3f3f3f;font-weight:normal;font-style:italic;transform:scaleX(0.9812);transform-origin:0 0;-webkit-text-stroke:0.25px #3f3f3f;">FTP Income</div><div style="position:absolute;left:271.60px;top:1263.99px;white-space:pre;font-family:'Liberation Sans',sans-serif;font-size:19.5px;line-height:19.5px;color:#3f3f3f;font-weight:normal;font-style:italic;transform:scaleX(1.0256);transform-origin:0 0;-webkit-text-stroke:0.25px #3f3f3f;">Interest Rate</div><div style="position:absolute;left:276.60px;top:1293.99px;white-space:pre;font-family:'Liberation Sans',sans-serif;font-size:19.5px;line-height:19.5px;color:#222222;font-weight:bold;font-style:italic;transform:scaleX(1.0248);transform-origin:0 0;">Net Interest Margin</div><div style="position:absolute;left:261.20px;top:1323.99px;white-space:pre;font-family:'Liberation Sans',sans-serif;font-size:19.5px;line-height:19.5px;color:#3f3f3f;font-weight:normal;transform:scaleX(0.9706);transform-origin:0 0;-webkit-text-stroke:0.25px #3f3f3f;">Doc Fees</div><div style="position:absolute;left:277.20px;top:1353.99px;white-space:pre;font-family:'Liberation Sans',sans-serif;font-size:19.5px;line-height:19.5px;color:#222222;font-weight:bold;font-style:italic;transform:scaleX(0.9169);transform-origin:0 0;">Doc Fees</div><div style="position:absolute;right:1935.80px;top:1204.29px;white-space:pre;font-family:'Liberation Sans',sans-serif;font-size:19.5px;line-height:19.5px;color:#222222;font-weight:bold;transform:scaleX(1.0300);transform-origin:100% 0;">10,853</div><div style="position:absolute;right:1671.80px;top:1204.29px;white-space:pre;font-family:'Liberation Sans',sans-serif;font-size:19.5px;line-height:19.5px;color:#222222;font-weight:bold;transform:scaleX(1.0300);transform-origin:100% 0;">12,914</div><div style="position:absolute;right:1011.80px;top:1204.29px;white-space:pre;font-family:'Liberation Sans',sans-serif;font-size:19.5px;line-height:19.5px;color:#222222;font-weight:bold;transform:scaleX(1.0300);transform-origin:100% 0;">144,205</div><div style="position:absolute;right:355.80px;top:1204.29px;white-space:pre;font-family:'Liberation Sans',sans-serif;font-size:19.5px;line-height:19.5px;color:#222222;font-weight:bold;transform:scaleX(1.0300);transform-origin:100% 0;">167,972</div><div style="position:absolute;right:1930.10px;top:1233.99px;white-space:pre;font-family:'Liberation Sans',sans-serif;font-size:19.5px;line-height:19.5px;color:#3f3f3f;font-weight:normal;font-style:italic;-webkit-text-stroke:0.25px #3f3f3f;">2.57%</div><div style="position:absolute;right:1666.10px;top:1233.99px;white-space:pre;font-family:'Liberation Sans',sans-serif;font-size:19.5px;line-height:19.5px;color:#3f3f3f;font-weight:normal;font-style:italic;-webkit-text-stroke:0.25px #3f3f3f;">2.51%</div><div style="position:absolute;right:1006.10px;top:1233.99px;white-space:pre;font-family:'Liberation Sans',sans-serif;font-size:19.5px;line-height:19.5px;color:#3f3f3f;font-weight:normal;font-style:italic;-webkit-text-stroke:0.25px #3f3f3f;">1.98%</div><div style="position:absolute;right:350.10px;top:1233.99px;white-space:pre;font-family:'Liberation Sans',sans-serif;font-size:19.5px;line-height:19.5px;color:#3f3f3f;font-weight:normal;font-style:italic;-webkit-text-stroke:0.25px #3f3f3f;">2.06%</div><div style="position:absolute;right:1930.10px;top:1263.99px;white-space:pre;font-family:'Liberation Sans',sans-serif;font-size:19.5px;line-height:19.5px;color:#3f3f3f;font-weight:normal;font-style:italic;-webkit-text-stroke:0.25px #3f3f3f;">2.41%</div><div style="position:absolute;right:1666.10px;top:1263.99px;white-space:pre;font-family:'Liberation Sans',sans-serif;font-size:19.5px;line-height:19.5px;color:#3f3f3f;font-weight:normal;font-style:italic;-webkit-text-stroke:0.25px #3f3f3f;">2.19%</div><div style="position:absolute;right:1006.10px;top:1263.99px;white-space:pre;font-family:'Liberation Sans',sans-serif;font-size:19.5px;line-height:19.5px;color:#3f3f3f;font-weight:normal;font-style:italic;-webkit-text-stroke:0.25px #3f3f3f;">1.94%</div><div style="position:absolute;right:350.10px;top:1263.99px;white-space:pre;font-family:'Liberation Sans',sans-serif;font-size:19.5px;line-height:19.5px;color:#3f3f3f;font-weight:normal;font-style:italic;-webkit-text-stroke:0.25px #3f3f3f;">1.99%</div><div style="position:absolute;right:1930.10px;top:1293.99px;white-space:pre;font-family:'Liberation Sans',sans-serif;font-size:19.5px;line-height:19.5px;color:#222222;font-weight:bold;font-style:italic;">0.16%</div><div style="position:absolute;right:1666.10px;top:1293.99px;white-space:pre;font-family:'Liberation Sans',sans-serif;font-size:19.5px;line-height:19.5px;color:#222222;font-weight:bold;font-style:italic;">0.32%</div><div style="position:absolute;right:1006.10px;top:1293.99px;white-space:pre;font-family:'Liberation Sans',sans-serif;font-size:19.5px;line-height:19.5px;color:#222222;font-weight:bold;font-style:italic;">0.04%</div><div style="position:absolute;right:350.10px;top:1293.99px;white-space:pre;font-family:'Liberation Sans',sans-serif;font-size:19.5px;line-height:19.5px;color:#222222;font-weight:bold;font-style:italic;">0.07%</div><div style="position:absolute;right:1935.80px;top:1323.99px;white-space:pre;font-family:'Liberation Sans',sans-serif;font-size:19.5px;line-height:19.5px;color:#3f3f3f;font-weight:normal;transform:scaleX(1.0300);transform-origin:100% 0;-webkit-text-stroke:0.25px #3f3f3f;">15</div><div style="position:absolute;right:1671.80px;top:1323.99px;white-space:pre;font-family:'Liberation Sans',sans-serif;font-size:19.5px;line-height:19.5px;color:#3f3f3f;font-weight:normal;transform:scaleX(1.0300);transform-origin:100% 0;-webkit-text-stroke:0.25px #3f3f3f;">15</div><div style="position:absolute;right:1011.80px;top:1323.99px;white-space:pre;font-family:'Liberation Sans',sans-serif;font-size:19.5px;line-height:19.5px;color:#3f3f3f;font-weight:normal;transform:scaleX(1.0300);transform-origin:100% 0;-webkit-text-stroke:0.25px #3f3f3f;">15</div><div style="position:absolute;right:355.80px;top:1323.99px;white-space:pre;font-family:'Liberation Sans',sans-serif;font-size:19.5px;line-height:19.5px;color:#3f3f3f;font-weight:normal;transform:scaleX(1.0300);transform-origin:100% 0;-webkit-text-stroke:0.25px #3f3f3f;">45</div><div style="position:absolute;right:1930.10px;top:1353.99px;white-space:pre;font-family:'Liberation Sans',sans-serif;font-size:19.5px;line-height:19.5px;color:#222222;font-weight:bold;font-style:italic;">0.14%</div><div style="position:absolute;right:1666.10px;top:1353.99px;white-space:pre;font-family:'Liberation Sans',sans-serif;font-size:19.5px;line-height:19.5px;color:#222222;font-weight:bold;font-style:italic;">0.13%</div><div style="position:absolute;right:1006.10px;top:1353.99px;white-space:pre;font-family:'Liberation Sans',sans-serif;font-size:19.5px;line-height:19.5px;color:#222222;font-weight:bold;font-style:italic;">0.01%</div><div style="position:absolute;right:350.10px;top:1353.99px;white-space:pre;font-family:'Liberation Sans',sans-serif;font-size:19.5px;line-height:19.5px;color:#222222;font-weight:bold;font-style:italic;">0.03%</div><div style="position:absolute;left:2084.4px;top:391px;width:4px;height:972px;background:#000;"></div></div></div></div></div></body></html>
